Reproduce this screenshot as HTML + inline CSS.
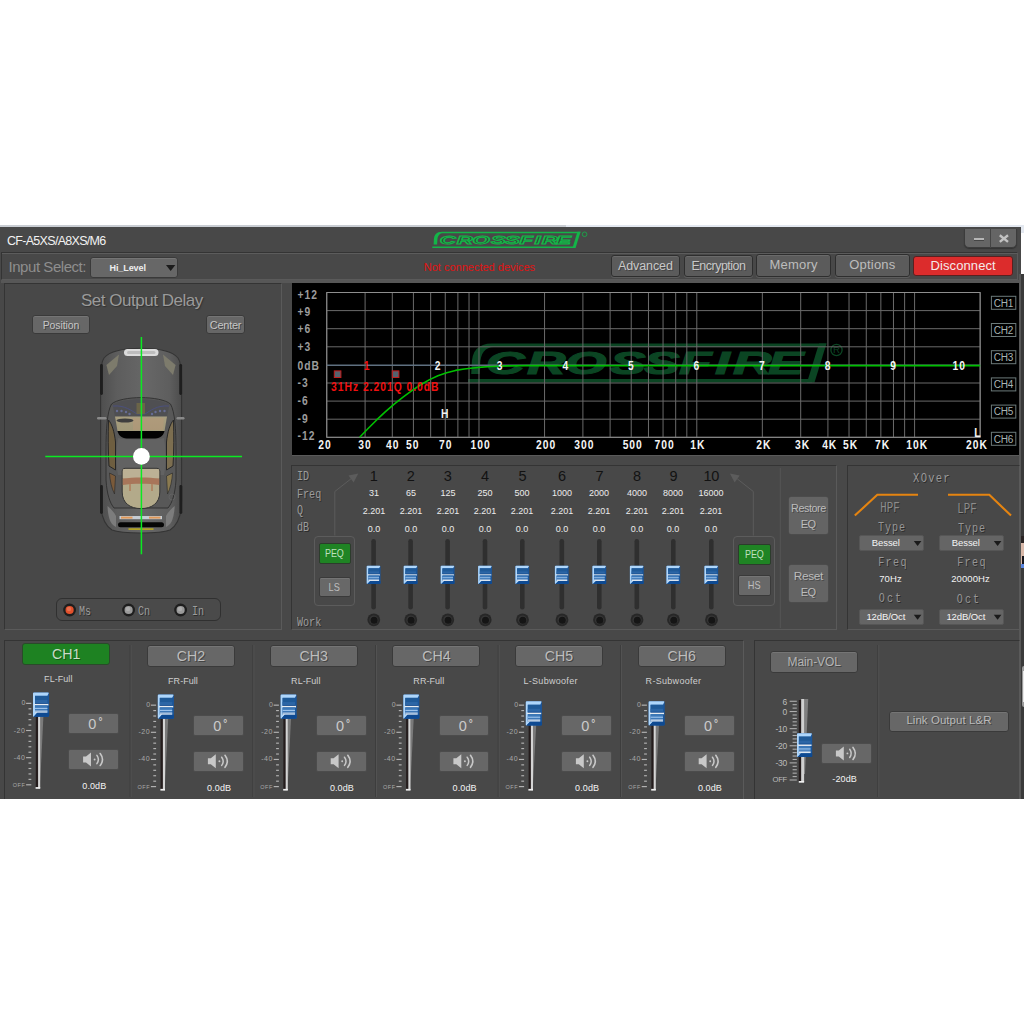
<!DOCTYPE html>
<html><head><meta charset="utf-8"><title>CF-A5XS/A8XS/M6</title>
<style>
html,body{margin:0;padding:0;background:#ffffff;}
body{width:1024px;height:1024px;position:relative;overflow:hidden;font-family:"Liberation Sans",sans-serif;}
.a{position:absolute;}
.t{position:absolute;white-space:nowrap;height:20px;line-height:20px;}
.panel{position:absolute;box-sizing:border-box;border:1px solid;border-color:#343434 #5a5a5a #5a5a5a #343434;}
.btn{position:absolute;box-sizing:border-box;border:1px solid #3a3a3a;border-radius:3px;box-shadow:inset 0 1px 0 #757575;text-align:center;white-space:nowrap;overflow:hidden;}
svg.ov{position:absolute;left:0;top:0;pointer-events:none;}
</style></head>
<body>
<div class="a" style="left:0.00px;top:225.40px;width:1021.00px;height:1.60px;background:#c9cdd3;"></div>
<div class="a" style="left:566.00px;top:224.60px;width:458.00px;height:8.80px;background:#e3e8f0;"></div>
<div class="a" style="left:0.00px;top:227.00px;width:1020.60px;height:571.50px;background:#484848;"></div>
<div class="a" style="left:1020.60px;top:274.00px;width:3.40px;height:524.50px;background:#3a3a3a;"></div>
<div class="a" style="left:1019.30px;top:274.00px;width:1.30px;height:524.50px;background:#585858;"></div>
<div class="a" style="left:1021.00px;top:536.00px;width:3.00px;height:32.00px;background:#d8b8a8;"></div>
<div class="a" style="left:1021.00px;top:536.00px;width:3.00px;height:7.00px;background:#2a2424;"></div>
<div class="a" style="left:1021.50px;top:556.00px;width:2.50px;height:9.00px;background:#16161c;"></div>
<div class="a" style="left:1021.00px;top:564.00px;width:3.00px;height:4.00px;background:#5a86e0;"></div>
<div class="a" style="left:1021.50px;top:666.00px;width:2.50px;height:41.00px;background:#9a9a9a;border-radius:3px 0 0 3px;"></div>
<div class="a" style="left:1022.50px;top:671.00px;width:1.50px;height:31.00px;background:#e8e8e8;"></div>
<div class="t" style="left:7.00px;top:231.00px;font-size:12.5px;color:#f2f2f2;letter-spacing:-0.7px;">CF-A5XS/A8XS/M6</div>
<div class="a" style="left:964px;top:228.5px;width:52.6px;height:19.5px;background:#656565;border:1px solid #3c3c3c;border-top:none;border-radius:0 0 5px 5px;box-sizing:border-box;box-shadow:0 1px 1px #333;"></div>
<div class="a" style="left:990.00px;top:228.50px;width:1.00px;height:19.00px;background:#444;"></div>
<div class="a" style="left:973.50px;top:237.90px;width:10.20px;height:1.80px;background:#b6b6b6;box-shadow:0 1px 0 #444;"></div>
<div class="panel" style="left:1.00px;top:252.00px;width:1016.50px;height:28.00px;box-shadow:inset 0 1px 0 #5c5c5c;"></div>
<div class="t" style="left:8.50px;top:257.00px;font-size:15px;color:#8e8e8e;letter-spacing:-0.45px;">Input Select:</div>
<div class="btn" style="left:89.80px;top:256.80px;width:88.40px;height:21.20px;line-height:20.60px;font-size:9px;color:#f0f0f0;background:#676767;border-radius:3px;"></div>
<div class="t" style="left:127.70px;top:257.50px;font-size:9px;color:#eeeeee;transform:translateX(-50%);font-weight:bold;letter-spacing:-0.1px;">Hi_Level</div>
<div class="t" style="left:423.80px;top:257.00px;font-size:11px;color:#e01212;letter-spacing:0px;">Not connected devices</div>
<div class="btn" style="left:610.50px;top:255.00px;width:69.80px;height:21.60px;line-height:21.00px;font-size:12.5px;color:#c8c8c8;background:#5b5b5b;border-color:#2e2e2e;box-shadow:inset 0 1px 0 #6a6a6a,0 1px 0 #5c5c5c;letter-spacing:-0.1px;text-shadow:1px 1px 0 #444;">Advanced</div>
<div class="btn" style="left:683.70px;top:255.00px;width:69.60px;height:21.60px;line-height:21.00px;font-size:12.5px;color:#c8c8c8;background:#5b5b5b;border-color:#2e2e2e;box-shadow:inset 0 1px 0 #6a6a6a,0 1px 0 #5c5c5c;letter-spacing:-0.5px;text-shadow:1px 1px 0 #444;">Encryption</div>
<div class="btn" style="left:756.00px;top:254.20px;width:75.30px;height:22.40px;line-height:21.80px;font-size:13px;color:#bdbdbd;background:#5b5b5b;border-color:#2e2e2e;box-shadow:inset 0 1px 0 #6a6a6a,0 1px 0 #5c5c5c;letter-spacing:0.2px;line-height:19.5px;">Memory</div>
<div class="btn" style="left:834.70px;top:254.20px;width:75.40px;height:22.40px;line-height:21.80px;font-size:13px;color:#bdbdbd;background:#5b5b5b;border-color:#2e2e2e;box-shadow:inset 0 1px 0 #6a6a6a,0 1px 0 #5c5c5c;letter-spacing:0.2px;line-height:19.5px;">Options</div>
<div class="btn" style="left:913.00px;top:255.50px;width:100.30px;height:20.30px;line-height:18.50px;font-size:13px;color:#f4eaea;background:#dc2c2c;border-color:#5a2020;box-shadow:none;letter-spacing:0.1px;">Disconnect</div>
<div class="panel" style="left:4.00px;top:283.00px;width:278.00px;height:347.00px;"></div>
<div class="t" style="left:81.00px;top:290.70px;font-size:17px;color:#9a9a9a;letter-spacing:-0.48px;text-shadow:1px 1px 1px #333;">Set Output Delay</div>
<div class="btn" style="left:32.20px;top:315.20px;width:57.60px;height:18.90px;line-height:18.30px;font-size:10.5px;color:#c6c6c6;background:#676767;letter-spacing:-0.1px;text-shadow:1px 1px 0 #444;">Position</div>
<div class="btn" style="left:205.70px;top:315.20px;width:39.70px;height:18.90px;line-height:18.30px;font-size:11px;color:#c6c6c6;background:#676767;letter-spacing:-0.25px;text-shadow:1px 1px 0 #444;">Center</div>
<div class="a" style="left:56px;top:598px;width:164.5px;height:22.6px;box-sizing:border-box;border:1px solid #303030;border-radius:6px;background:#4a4a4a;"></div>
<div class="t" style="left:79.00px;top:601.50px;font-size:12px;color:#9c9c9c;font-family:'Liberation Mono',monospace;letter-spacing:0px;text-shadow:1px 1px 0 #2c2c2c;transform:scaleX(0.84);transform-origin:0 50%;">Ms</div>
<div class="t" style="left:138.00px;top:601.50px;font-size:12px;color:#9c9c9c;font-family:'Liberation Mono',monospace;letter-spacing:0px;text-shadow:1px 1px 0 #2c2c2c;transform:scaleX(0.84);transform-origin:0 50%;">Cn</div>
<div class="t" style="left:191.50px;top:601.50px;font-size:12px;color:#9c9c9c;font-family:'Liberation Mono',monospace;letter-spacing:0px;text-shadow:1px 1px 0 #2c2c2c;transform:scaleX(0.84);transform-origin:0 50%;">In</div>
<div class="a" style="left:1.00px;top:280.00px;width:1018.00px;height:3.20px;background:#575757;"></div>
<div class="a" style="left:291.75px;top:283.20px;width:727.00px;height:171.80px;background:#000000;"></div>
<div class="a" style="left:291.75px;top:455.00px;width:727.00px;height:1.40px;background:#5a5a5a;"></div>
<div class="panel" style="left:291.00px;top:465.00px;width:545.50px;height:165.00px;"></div>
<div class="t" style="left:297.30px;top:467.00px;font-size:12px;color:#9c9c9c;font-family:'Liberation Mono',monospace;letter-spacing:0px;text-shadow:1px 1px 0 #2c2c2c;transform:scaleX(0.84);transform-origin:0 50%;">ID</div>
<div class="t" style="left:297.30px;top:485.00px;font-size:12px;color:#9c9c9c;font-family:'Liberation Mono',monospace;letter-spacing:0px;text-shadow:1px 1px 0 #2c2c2c;transform:scaleX(0.84);transform-origin:0 50%;">Freq</div>
<div class="t" style="left:297.30px;top:500.80px;font-size:12px;color:#9c9c9c;font-family:'Liberation Mono',monospace;letter-spacing:0px;text-shadow:1px 1px 0 #2c2c2c;transform:scaleX(0.84);transform-origin:0 50%;">Q</div>
<div class="t" style="left:297.30px;top:517.50px;font-size:12px;color:#9c9c9c;font-family:'Liberation Mono',monospace;letter-spacing:0px;text-shadow:1px 1px 0 #2c2c2c;transform:scaleX(0.84);transform-origin:0 50%;">dB</div>
<div class="t" style="left:297.30px;top:612.50px;font-size:12px;color:#9c9c9c;font-family:'Liberation Mono',monospace;letter-spacing:0px;text-shadow:1px 1px 0 #2c2c2c;transform:scaleX(0.84);transform-origin:0 50%;">Work</div>
<div class="t" style="left:373.60px;top:465.90px;font-size:14.5px;color:#121212;transform:translateX(-50%);letter-spacing:-0.3px;">1</div>
<div class="t" style="left:373.60px;top:483.00px;font-size:10px;color:#ececec;transform:translateX(-50%) scale(0.9,0.87);">31</div>
<div class="t" style="left:373.60px;top:501.00px;font-size:10px;color:#ececec;transform:translateX(-50%) scale(0.9,0.87);">2.201</div>
<div class="t" style="left:373.60px;top:519.00px;font-size:10px;color:#ececec;transform:translateX(-50%) scale(0.9,0.87);">0.0</div>
<div class="t" style="left:410.60px;top:465.90px;font-size:14.5px;color:#121212;transform:translateX(-50%);letter-spacing:-0.3px;">2</div>
<div class="t" style="left:410.60px;top:483.00px;font-size:10px;color:#ececec;transform:translateX(-50%) scale(0.9,0.87);">65</div>
<div class="t" style="left:410.60px;top:501.00px;font-size:10px;color:#ececec;transform:translateX(-50%) scale(0.9,0.87);">2.201</div>
<div class="t" style="left:410.60px;top:519.00px;font-size:10px;color:#ececec;transform:translateX(-50%) scale(0.9,0.87);">0.0</div>
<div class="t" style="left:447.60px;top:465.90px;font-size:14.5px;color:#121212;transform:translateX(-50%);letter-spacing:-0.3px;">3</div>
<div class="t" style="left:447.60px;top:483.00px;font-size:10px;color:#ececec;transform:translateX(-50%) scale(0.9,0.87);">125</div>
<div class="t" style="left:447.60px;top:501.00px;font-size:10px;color:#ececec;transform:translateX(-50%) scale(0.9,0.87);">2.201</div>
<div class="t" style="left:447.60px;top:519.00px;font-size:10px;color:#ececec;transform:translateX(-50%) scale(0.9,0.87);">0.0</div>
<div class="t" style="left:485.00px;top:465.90px;font-size:14.5px;color:#121212;transform:translateX(-50%);letter-spacing:-0.3px;">4</div>
<div class="t" style="left:485.00px;top:483.00px;font-size:10px;color:#ececec;transform:translateX(-50%) scale(0.9,0.87);">250</div>
<div class="t" style="left:485.00px;top:501.00px;font-size:10px;color:#ececec;transform:translateX(-50%) scale(0.9,0.87);">2.201</div>
<div class="t" style="left:485.00px;top:519.00px;font-size:10px;color:#ececec;transform:translateX(-50%) scale(0.9,0.87);">0.0</div>
<div class="t" style="left:522.30px;top:465.90px;font-size:14.5px;color:#121212;transform:translateX(-50%);letter-spacing:-0.3px;">5</div>
<div class="t" style="left:522.30px;top:483.00px;font-size:10px;color:#ececec;transform:translateX(-50%) scale(0.9,0.87);">500</div>
<div class="t" style="left:522.30px;top:501.00px;font-size:10px;color:#ececec;transform:translateX(-50%) scale(0.9,0.87);">2.201</div>
<div class="t" style="left:522.30px;top:519.00px;font-size:10px;color:#ececec;transform:translateX(-50%) scale(0.9,0.87);">0.0</div>
<div class="t" style="left:561.80px;top:465.90px;font-size:14.5px;color:#121212;transform:translateX(-50%);letter-spacing:-0.3px;">6</div>
<div class="t" style="left:561.80px;top:483.00px;font-size:10px;color:#ececec;transform:translateX(-50%) scale(0.9,0.87);">1000</div>
<div class="t" style="left:561.80px;top:501.00px;font-size:10px;color:#ececec;transform:translateX(-50%) scale(0.9,0.87);">2.201</div>
<div class="t" style="left:561.80px;top:519.00px;font-size:10px;color:#ececec;transform:translateX(-50%) scale(0.9,0.87);">0.0</div>
<div class="t" style="left:599.30px;top:465.90px;font-size:14.5px;color:#121212;transform:translateX(-50%);letter-spacing:-0.3px;">7</div>
<div class="t" style="left:599.30px;top:483.00px;font-size:10px;color:#ececec;transform:translateX(-50%) scale(0.9,0.87);">2000</div>
<div class="t" style="left:599.30px;top:501.00px;font-size:10px;color:#ececec;transform:translateX(-50%) scale(0.9,0.87);">2.201</div>
<div class="t" style="left:599.30px;top:519.00px;font-size:10px;color:#ececec;transform:translateX(-50%) scale(0.9,0.87);">0.0</div>
<div class="t" style="left:636.80px;top:465.90px;font-size:14.5px;color:#121212;transform:translateX(-50%);letter-spacing:-0.3px;">8</div>
<div class="t" style="left:636.80px;top:483.00px;font-size:10px;color:#ececec;transform:translateX(-50%) scale(0.9,0.87);">4000</div>
<div class="t" style="left:636.80px;top:501.00px;font-size:10px;color:#ececec;transform:translateX(-50%) scale(0.9,0.87);">2.201</div>
<div class="t" style="left:636.80px;top:519.00px;font-size:10px;color:#ececec;transform:translateX(-50%) scale(0.9,0.87);">0.0</div>
<div class="t" style="left:673.30px;top:465.90px;font-size:14.5px;color:#121212;transform:translateX(-50%);letter-spacing:-0.3px;">9</div>
<div class="t" style="left:673.30px;top:483.00px;font-size:10px;color:#ececec;transform:translateX(-50%) scale(0.9,0.87);">8000</div>
<div class="t" style="left:673.30px;top:501.00px;font-size:10px;color:#ececec;transform:translateX(-50%) scale(0.9,0.87);">2.201</div>
<div class="t" style="left:673.30px;top:519.00px;font-size:10px;color:#ececec;transform:translateX(-50%) scale(0.9,0.87);">0.0</div>
<div class="t" style="left:711.30px;top:465.90px;font-size:14.5px;color:#121212;transform:translateX(-50%);letter-spacing:-0.3px;">10</div>
<div class="t" style="left:711.30px;top:483.00px;font-size:10px;color:#ececec;transform:translateX(-50%) scale(0.9,0.87);">16000</div>
<div class="t" style="left:711.30px;top:501.00px;font-size:10px;color:#ececec;transform:translateX(-50%) scale(0.9,0.87);">2.201</div>
<div class="t" style="left:711.30px;top:519.00px;font-size:10px;color:#ececec;transform:translateX(-50%) scale(0.9,0.87);">0.0</div>
<div class="a" style="left:313.80px;top:535.5px;width:41.70px;height:70px;box-sizing:border-box;border:1px solid #5c5c5c;border-radius:4px;"></div>
<div class="btn" style="left:318.50px;top:543.20px;width:32.60px;height:21.20px;line-height:19.20px;font-size:11.5px;color:#bfe0bf;background:#1f8424;border-color:#2c3c2c;box-shadow:none;border-radius:2px;"><span style="display:inline-block;transform:scaleX(0.78) translateX(-1px)">PEQ</span></div>
<div class="btn" style="left:318.50px;top:577.00px;width:32.60px;height:20.40px;line-height:18.40px;font-size:11.5px;color:#bdbdbd;background:#686868;border-radius:2px;"><span style="display:inline-block;transform:scaleX(0.8) translateX(-1px)">LS</span></div>
<div class="a" style="left:733.00px;top:535.5px;width:41.60px;height:70px;box-sizing:border-box;border:1px solid #5c5c5c;border-radius:4px;"></div>
<div class="btn" style="left:738.00px;top:544.00px;width:33.30px;height:21.00px;line-height:19.00px;font-size:11.5px;color:#bfe0bf;background:#1f8424;border-color:#2c3c2c;box-shadow:none;border-radius:2px;"><span style="display:inline-block;transform:scaleX(0.78) translateX(-1px)">PEQ</span></div>
<div class="btn" style="left:738.00px;top:574.80px;width:33.30px;height:21.30px;line-height:19.30px;font-size:11.5px;color:#bdbdbd;background:#686868;border-radius:2px;"><span style="display:inline-block;transform:scaleX(0.8) translateX(-1px)">HS</span></div>
<div class="a" style="left:789.3px;top:497.30px;width:38.3px;height:36.70px;background:#646464;border-radius:2px;box-shadow:0 0 0 0.5px #505050;"></div>
<div class="t" style="left:808.40px;top:498.00px;font-size:10.8px;color:#bcbcbc;transform:translateX(-50%);letter-spacing:-0.45px;text-shadow:1px 1px 0 #4a4a4a;">Restore</div>
<div class="t" style="left:808.20px;top:513.90px;font-size:11px;color:#bcbcbc;transform:translateX(-50%);letter-spacing:-0.4px;text-shadow:1px 1px 0 #4a4a4a;">EQ</div>
<div class="a" style="left:789.3px;top:565.30px;width:38.3px;height:37.00px;background:#646464;border-radius:2px;box-shadow:0 0 0 0.5px #505050;"></div>
<div class="t" style="left:808.40px;top:566.30px;font-size:11.8px;color:#bcbcbc;transform:translateX(-50%);letter-spacing:-0.3px;text-shadow:1px 1px 0 #4a4a4a;">Reset</div>
<div class="t" style="left:808.20px;top:581.90px;font-size:11px;color:#bcbcbc;transform:translateX(-50%);letter-spacing:-0.4px;text-shadow:1px 1px 0 #4a4a4a;">EQ</div>
<div class="panel" style="left:847.00px;top:465.00px;width:172.50px;height:165.00px;"></div>
<div class="t" style="left:932.20px;top:469.20px;font-size:12.5px;color:#9a9a9a;font-family:'Liberation Mono',monospace;letter-spacing:1.5px;text-shadow:1px 1px 0 #2c2c2c;transform:translateX(-50%) scaleX(0.84);">XOver</div>
<div class="t" style="left:890.30px;top:499.30px;font-size:15px;color:#8c8c8c;font-family:'Liberation Mono',monospace;letter-spacing:0px;text-shadow:1px 1px 0 #2c2c2c;transform:translateX(-50%) scaleX(0.72);">HPF</div>
<div class="t" style="left:966.80px;top:500.00px;font-size:15px;color:#8c8c8c;font-family:'Liberation Mono',monospace;letter-spacing:0px;text-shadow:1px 1px 0 #2c2c2c;transform:translateX(-50%) scaleX(0.72);">LPF</div>
<div class="t" style="left:892.30px;top:517.80px;font-size:12px;color:#969696;font-family:'Liberation Mono',monospace;letter-spacing:1.2px;text-shadow:1px 1px 0 #2c2c2c;transform:translateX(-50%) scaleX(0.84);">Type</div>
<div class="t" style="left:971.50px;top:518.60px;font-size:12px;color:#969696;font-family:'Liberation Mono',monospace;letter-spacing:1.2px;text-shadow:1px 1px 0 #2c2c2c;transform:translateX(-50%) scaleX(0.84);">Type</div>
<div class="t" style="left:892.60px;top:552.60px;font-size:12px;color:#969696;font-family:'Liberation Mono',monospace;letter-spacing:1.6px;text-shadow:1px 1px 0 #2c2c2c;transform:translateX(-50%) scaleX(0.84);">Freq</div>
<div class="t" style="left:972.10px;top:553.00px;font-size:12px;color:#969696;font-family:'Liberation Mono',monospace;letter-spacing:1.6px;text-shadow:1px 1px 0 #2c2c2c;transform:translateX(-50%) scaleX(0.84);">Freq</div>
<div class="t" style="left:890.70px;top:588.80px;font-size:12px;color:#969696;font-family:'Liberation Mono',monospace;letter-spacing:2.6px;text-shadow:1px 1px 0 #2c2c2c;transform:translateX(-50%) scaleX(0.84);">Oct</div>
<div class="t" style="left:969.40px;top:589.60px;font-size:12px;color:#969696;font-family:'Liberation Mono',monospace;letter-spacing:2.6px;text-shadow:1px 1px 0 #2c2c2c;transform:translateX(-50%) scaleX(0.84);">Oct</div>
<div class="t" style="left:890.50px;top:568.60px;font-size:9.5px;color:#f2f2f2;transform:translateX(-50%);letter-spacing:0.1px;">70Hz</div>
<div class="t" style="left:970.50px;top:568.60px;font-size:9.5px;color:#f2f2f2;transform:translateX(-50%);letter-spacing:0.1px;">20000Hz</div>
<div class="btn" style="left:859.40px;top:535.20px;width:64.60px;height:15.80px;line-height:15.20px;font-size:9px;color:#eee;background:#656565;border-radius:2px;border-color:#565656;box-shadow:none;"></div>
<div class="t" style="left:885.80px;top:533.20px;font-size:9.5px;color:#f4f4f4;transform:translateX(-50%);letter-spacing:-0.1px;">Bessel</div>
<div class="btn" style="left:859.40px;top:609.00px;width:64.60px;height:15.80px;line-height:15.20px;font-size:9px;color:#eee;background:#656565;border-radius:2px;border-color:#565656;box-shadow:none;"></div>
<div class="t" style="left:885.80px;top:607.00px;font-size:9.5px;color:#f4f4f4;transform:translateX(-50%);letter-spacing:-0.1px;">12dB/Oct</div>
<div class="btn" style="left:939.40px;top:535.20px;width:64.60px;height:15.80px;line-height:15.20px;font-size:9px;color:#eee;background:#656565;border-radius:2px;border-color:#565656;box-shadow:none;"></div>
<div class="t" style="left:965.80px;top:533.20px;font-size:9.5px;color:#f4f4f4;transform:translateX(-50%);letter-spacing:-0.1px;">Bessel</div>
<div class="btn" style="left:939.40px;top:609.00px;width:64.60px;height:15.80px;line-height:15.20px;font-size:9px;color:#eee;background:#656565;border-radius:2px;border-color:#565656;box-shadow:none;"></div>
<div class="t" style="left:965.80px;top:607.00px;font-size:9.5px;color:#f4f4f4;transform:translateX(-50%);letter-spacing:-0.1px;">12dB/Oct</div>
<div class="panel" style="left:4.00px;top:640.00px;width:740.00px;height:158.70px;border-bottom:none;"></div>
<div class="panel" style="left:753.60px;top:640.00px;width:266.00px;height:158.70px;border-bottom:none;"></div>
<div class="btn" style="left:22.20px;top:643.40px;width:87.80px;height:21.90px;line-height:21.30px;font-size:14.2px;color:#c9dcc9;background:#1e8222;border-color:#2a4a2a;box-shadow:none;border-radius:3px;text-shadow:1px 1px 0 #145a18;">CH1</div>
<div class="t" style="left:58.30px;top:669.30px;font-size:9px;color:#cfcfcf;transform:translateX(-50%);letter-spacing:0.05px;">FL-Full</div>
<div class="t" style="left:25.30px;top:693.40px;font-size:7px;color:#a8a8a8;transform:translateX(-100%);letter-spacing:0px;">0</div>
<div class="t" style="left:25.30px;top:720.50px;font-size:7px;color:#a8a8a8;transform:translateX(-100%);letter-spacing:0.5px;">-20</div>
<div class="t" style="left:25.30px;top:747.60px;font-size:7px;color:#a8a8a8;transform:translateX(-100%);letter-spacing:0.5px;">-40</div>
<div class="t" style="left:25.30px;top:774.90px;font-size:5.5px;color:#a8a8a8;transform:translateX(-100%);letter-spacing:0.55px;">OFF</div>
<div class="btn" style="left:68.20px;top:713.20px;width:50.80px;height:20.90px;line-height:20.30px;font-size:14px;color:#c8c8c8;background:#676767;border-color:#4c4c4c;box-shadow:none;border-radius:2px;"></div>
<div class="t" style="left:92.40px;top:714.20px;font-size:14.5px;color:#cacaca;transform:translateX(-50%);">0</div>
<div class="t" style="left:100.40px;top:712.20px;font-size:10px;color:#cacaca;transform:translateX(-50%);font-weight:bold;">°</div>
<div class="btn" style="left:68.20px;top:749.30px;width:50.80px;height:20.50px;line-height:19.90px;font-size:14px;color:#c8c8c8;background:#676767;border-color:#4c4c4c;box-shadow:none;border-radius:2px;"></div>
<div class="t" style="left:94.30px;top:775.70px;font-size:9px;color:#f4f4f4;transform:translateX(-50%);letter-spacing:0.1px;">0.0dB</div>
<div class="btn" style="left:146.80px;top:645.10px;width:88.20px;height:22.10px;line-height:21.50px;font-size:14.2px;color:#bdbdbd;background:#676767;text-shadow:1px 1px 0 #444;">CH2</div>
<div class="t" style="left:183.00px;top:670.80px;font-size:9px;color:#cfcfcf;transform:translateX(-50%);letter-spacing:0.05px;">FR-Full</div>
<div class="t" style="left:150.10px;top:695.20px;font-size:7px;color:#a8a8a8;transform:translateX(-100%);letter-spacing:0px;">0</div>
<div class="t" style="left:150.10px;top:722.30px;font-size:7px;color:#a8a8a8;transform:translateX(-100%);letter-spacing:0.5px;">-20</div>
<div class="t" style="left:150.10px;top:749.40px;font-size:7px;color:#a8a8a8;transform:translateX(-100%);letter-spacing:0.5px;">-40</div>
<div class="t" style="left:150.10px;top:776.70px;font-size:5.5px;color:#a8a8a8;transform:translateX(-100%);letter-spacing:0.55px;">OFF</div>
<div class="btn" style="left:193.00px;top:715.00px;width:50.80px;height:20.90px;line-height:20.30px;font-size:14px;color:#c8c8c8;background:#676767;border-color:#4c4c4c;box-shadow:none;border-radius:2px;"></div>
<div class="t" style="left:217.20px;top:716.00px;font-size:14.5px;color:#cacaca;transform:translateX(-50%);">0</div>
<div class="t" style="left:225.20px;top:714.00px;font-size:10px;color:#cacaca;transform:translateX(-50%);font-weight:bold;">°</div>
<div class="btn" style="left:193.00px;top:751.10px;width:50.80px;height:20.50px;line-height:19.90px;font-size:14px;color:#c8c8c8;background:#676767;border-color:#4c4c4c;box-shadow:none;border-radius:2px;"></div>
<div class="t" style="left:219.10px;top:777.50px;font-size:9px;color:#f4f4f4;transform:translateX(-50%);letter-spacing:0.1px;">0.0dB</div>
<div class="btn" style="left:269.60px;top:645.10px;width:88.20px;height:22.10px;line-height:21.50px;font-size:14.2px;color:#bdbdbd;background:#676767;text-shadow:1px 1px 0 #444;">CH3</div>
<div class="t" style="left:305.80px;top:670.80px;font-size:9px;color:#cfcfcf;transform:translateX(-50%);letter-spacing:0.05px;">RL-Full</div>
<div class="t" style="left:272.90px;top:695.20px;font-size:7px;color:#a8a8a8;transform:translateX(-100%);letter-spacing:0px;">0</div>
<div class="t" style="left:272.90px;top:722.30px;font-size:7px;color:#a8a8a8;transform:translateX(-100%);letter-spacing:0.5px;">-20</div>
<div class="t" style="left:272.90px;top:749.40px;font-size:7px;color:#a8a8a8;transform:translateX(-100%);letter-spacing:0.5px;">-40</div>
<div class="t" style="left:272.90px;top:776.70px;font-size:5.5px;color:#a8a8a8;transform:translateX(-100%);letter-spacing:0.55px;">OFF</div>
<div class="btn" style="left:315.80px;top:715.00px;width:50.80px;height:20.90px;line-height:20.30px;font-size:14px;color:#c8c8c8;background:#676767;border-color:#4c4c4c;box-shadow:none;border-radius:2px;"></div>
<div class="t" style="left:340.00px;top:716.00px;font-size:14.5px;color:#cacaca;transform:translateX(-50%);">0</div>
<div class="t" style="left:348.00px;top:714.00px;font-size:10px;color:#cacaca;transform:translateX(-50%);font-weight:bold;">°</div>
<div class="btn" style="left:315.80px;top:751.10px;width:50.80px;height:20.50px;line-height:19.90px;font-size:14px;color:#c8c8c8;background:#676767;border-color:#4c4c4c;box-shadow:none;border-radius:2px;"></div>
<div class="t" style="left:341.90px;top:777.50px;font-size:9px;color:#f4f4f4;transform:translateX(-50%);letter-spacing:0.1px;">0.0dB</div>
<div class="btn" style="left:392.30px;top:645.10px;width:88.20px;height:22.10px;line-height:21.50px;font-size:14.2px;color:#bdbdbd;background:#676767;text-shadow:1px 1px 0 #444;">CH4</div>
<div class="t" style="left:428.80px;top:670.80px;font-size:9px;color:#cfcfcf;transform:translateX(-50%);letter-spacing:0.05px;">RR-Full</div>
<div class="t" style="left:395.60px;top:695.20px;font-size:7px;color:#a8a8a8;transform:translateX(-100%);letter-spacing:0px;">0</div>
<div class="t" style="left:395.60px;top:722.30px;font-size:7px;color:#a8a8a8;transform:translateX(-100%);letter-spacing:0.5px;">-20</div>
<div class="t" style="left:395.60px;top:749.40px;font-size:7px;color:#a8a8a8;transform:translateX(-100%);letter-spacing:0.5px;">-40</div>
<div class="t" style="left:395.60px;top:776.70px;font-size:5.5px;color:#a8a8a8;transform:translateX(-100%);letter-spacing:0.55px;">OFF</div>
<div class="btn" style="left:438.50px;top:715.00px;width:50.80px;height:20.90px;line-height:20.30px;font-size:14px;color:#c8c8c8;background:#676767;border-color:#4c4c4c;box-shadow:none;border-radius:2px;"></div>
<div class="t" style="left:462.70px;top:716.00px;font-size:14.5px;color:#cacaca;transform:translateX(-50%);">0</div>
<div class="t" style="left:470.70px;top:714.00px;font-size:10px;color:#cacaca;transform:translateX(-50%);font-weight:bold;">°</div>
<div class="btn" style="left:438.50px;top:751.10px;width:50.80px;height:20.50px;line-height:19.90px;font-size:14px;color:#c8c8c8;background:#676767;border-color:#4c4c4c;box-shadow:none;border-radius:2px;"></div>
<div class="t" style="left:464.60px;top:777.50px;font-size:9px;color:#f4f4f4;transform:translateX(-50%);letter-spacing:0.1px;">0.0dB</div>
<div class="btn" style="left:514.80px;top:645.10px;width:88.20px;height:22.10px;line-height:21.50px;font-size:14.2px;color:#bdbdbd;background:#676767;text-shadow:1px 1px 0 #444;">CH5</div>
<div class="t" style="left:550.60px;top:670.80px;font-size:9px;color:#cfcfcf;transform:translateX(-50%);letter-spacing:0.3px;">L-Subwoofer</div>
<div class="t" style="left:518.10px;top:695.20px;font-size:7px;color:#a8a8a8;transform:translateX(-100%);letter-spacing:0px;">0</div>
<div class="t" style="left:518.10px;top:722.30px;font-size:7px;color:#a8a8a8;transform:translateX(-100%);letter-spacing:0.5px;">-20</div>
<div class="t" style="left:518.10px;top:749.40px;font-size:7px;color:#a8a8a8;transform:translateX(-100%);letter-spacing:0.5px;">-40</div>
<div class="t" style="left:518.10px;top:776.70px;font-size:5.5px;color:#a8a8a8;transform:translateX(-100%);letter-spacing:0.55px;">OFF</div>
<div class="btn" style="left:561.00px;top:715.00px;width:50.80px;height:20.90px;line-height:20.30px;font-size:14px;color:#c8c8c8;background:#676767;border-color:#4c4c4c;box-shadow:none;border-radius:2px;"></div>
<div class="t" style="left:585.20px;top:716.00px;font-size:14.5px;color:#cacaca;transform:translateX(-50%);">0</div>
<div class="t" style="left:593.20px;top:714.00px;font-size:10px;color:#cacaca;transform:translateX(-50%);font-weight:bold;">°</div>
<div class="btn" style="left:561.00px;top:751.10px;width:50.80px;height:20.50px;line-height:19.90px;font-size:14px;color:#c8c8c8;background:#676767;border-color:#4c4c4c;box-shadow:none;border-radius:2px;"></div>
<div class="t" style="left:587.10px;top:777.50px;font-size:9px;color:#f4f4f4;transform:translateX(-50%);letter-spacing:0.1px;">0.0dB</div>
<div class="btn" style="left:637.60px;top:645.10px;width:88.20px;height:22.10px;line-height:21.50px;font-size:14.2px;color:#bdbdbd;background:#676767;text-shadow:1px 1px 0 #444;">CH6</div>
<div class="t" style="left:673.50px;top:670.80px;font-size:9px;color:#cfcfcf;transform:translateX(-50%);letter-spacing:0.3px;">R-Subwoofer</div>
<div class="t" style="left:640.90px;top:695.20px;font-size:7px;color:#a8a8a8;transform:translateX(-100%);letter-spacing:0px;">0</div>
<div class="t" style="left:640.90px;top:722.30px;font-size:7px;color:#a8a8a8;transform:translateX(-100%);letter-spacing:0.5px;">-20</div>
<div class="t" style="left:640.90px;top:749.40px;font-size:7px;color:#a8a8a8;transform:translateX(-100%);letter-spacing:0.5px;">-40</div>
<div class="t" style="left:640.90px;top:776.70px;font-size:5.5px;color:#a8a8a8;transform:translateX(-100%);letter-spacing:0.55px;">OFF</div>
<div class="btn" style="left:683.80px;top:715.00px;width:50.80px;height:20.90px;line-height:20.30px;font-size:14px;color:#c8c8c8;background:#676767;border-color:#4c4c4c;box-shadow:none;border-radius:2px;"></div>
<div class="t" style="left:708.00px;top:716.00px;font-size:14.5px;color:#cacaca;transform:translateX(-50%);">0</div>
<div class="t" style="left:716.00px;top:714.00px;font-size:10px;color:#cacaca;transform:translateX(-50%);font-weight:bold;">°</div>
<div class="btn" style="left:683.80px;top:751.10px;width:50.80px;height:20.50px;line-height:19.90px;font-size:14px;color:#c8c8c8;background:#676767;border-color:#4c4c4c;box-shadow:none;border-radius:2px;"></div>
<div class="t" style="left:709.90px;top:777.50px;font-size:9px;color:#f4f4f4;transform:translateX(-50%);letter-spacing:0.1px;">0.0dB</div>
<div class="btn" style="left:770.00px;top:651.20px;width:88.40px;height:21.80px;line-height:21.20px;font-size:12px;color:#b4b4b4;background:#676767;letter-spacing:-0.1px;text-shadow:1px 1px 0 #444;">Main-VOL</div>
<div class="t" style="left:786.90px;top:691.50px;font-size:8.5px;color:#bcbcbc;transform:translateX(-100%);letter-spacing:-0.3px;">6</div>
<div class="t" style="left:786.90px;top:701.77px;font-size:8.5px;color:#bcbcbc;transform:translateX(-100%);letter-spacing:-0.3px;">0</div>
<div class="t" style="left:786.90px;top:718.88px;font-size:8.5px;color:#bcbcbc;transform:translateX(-100%);letter-spacing:-0.3px;">-10</div>
<div class="t" style="left:786.90px;top:736.00px;font-size:8.5px;color:#bcbcbc;transform:translateX(-100%);letter-spacing:-0.3px;">-20</div>
<div class="t" style="left:786.90px;top:753.11px;font-size:8.5px;color:#bcbcbc;transform:translateX(-100%);letter-spacing:-0.3px;">-30</div>
<div class="t" style="left:786.90px;top:770.23px;font-size:7.6px;color:#bcbcbc;transform:translateX(-100%);letter-spacing:-0.3px;">OFF</div>
<div class="btn" style="left:821.00px;top:743.20px;width:51.10px;height:20.40px;line-height:19.80px;font-size:14px;color:#c8c8c8;background:#676767;border-color:#4c4c4c;box-shadow:none;border-radius:2px;"></div>
<div class="t" style="left:844.60px;top:768.80px;font-size:9px;color:#f4f4f4;transform:translateX(-50%);letter-spacing:0.1px;">-20dB</div>
<div class="btn" style="left:888.50px;top:710.50px;width:120.90px;height:21.10px;line-height:17.70px;font-size:11.5px;color:#bababa;background:#676767;letter-spacing:0.05px;text-shadow:1px 1px 0 #444;">Link Output L&amp;R</div>
<svg class="ov" width="1024" height="1024" viewBox="0 0 1024 1024">
<path d="M999.8,235.3 L1008,241.9 M1008,235.3 L999.8,241.9" stroke="#c2c2c2" stroke-width="2.4" fill="none"/>
<g transform="translate(432.30 231.60) scale(0.4135)" fill="#13b548"><path d="M24,0.4 L358.5,0.4 L357.4,3.9 L26,3.9 C17.5,3.9 12.2,10 12.2,22 L11.6,31 L3.2,31 L3.7,22 C3.7,8 10,0.4 24,0.4 Z"/><path d="M351,0.4 L358.5,0.4 L346.5,39.6 L339,39.6 Z"/><path d="M0,36 L345,36 L344,39.6 L0,39.6 Z"/><text transform="scale(2.0121 1)" x="8.95 29.32 48.21 70.57 87.47 104.87 122.76 131.70 149.10" y="29.6" font-family='"Liberation Sans",sans-serif' font-weight="bold" font-style="italic" font-size="26.5" fill="#2c4a34" stroke="#13b548" stroke-width="2.2">CROSSFIRE</text></g>
<circle cx="584.6" cy="234.3" r="2.3" fill="none" stroke="#13b548" stroke-width="0.8"/>
<path d="M166,265.1 L175.3,265.1 L170.65,270.9 Z" fill="#1c1c1c"/>
<defs><linearGradient id="cb" x1="0" x2="1" y1="0" y2="0"><stop offset="0" stop-color="#4e4e4e"/><stop offset="0.2" stop-color="#5d5d5d"/><stop offset="0.55" stop-color="#676767"/><stop offset="0.85" stop-color="#5e5e5e"/><stop offset="1" stop-color="#4c4c4c"/></linearGradient><linearGradient id="cw" x1="0" x2="0" y1="0" y2="1"><stop offset="0" stop-color="#a89e80"/><stop offset="1" stop-color="#a09878"/></linearGradient></defs><path d="M141,348.3 C160,348.3 172,351 178,358 C181,362 181.6,370 181.6,380 L181.6,500 C181.6,515 178,525 170,530 C160,534 122,534 112,530 C104,525 100.6,515 100.6,500 L100.6,380 C100.6,370 101,362 104,358 C110,351 122,348.3 141,348.3 Z" fill="url(#cb)" stroke="#343434" stroke-width="1.1"/><rect x="100.0" y="364.0" width="2.9" height="31.0" rx="1.4" fill="#1e1e1e"/><rect x="179.2" y="364.0" width="2.9" height="31.0" rx="1.4" fill="#1e1e1e"/><rect x="100.0" y="485.0" width="2.9" height="29.0" rx="1.4" fill="#1e1e1e"/><rect x="179.4" y="485.0" width="2.9" height="29.0" rx="1.4" fill="#1e1e1e"/><rect x="124" y="348.9" width="34.5" height="7" rx="3.5" fill="#dcdcdc"/><rect x="127" y="351" width="28.5" height="3" rx="1.5" fill="#bdbdbd"/><path d="M106.4,365 L119,354.5 L117,366 L109,375 Z" fill="#7d7b6c"/><path d="M175.6,365 L163,354.5 L165,366 L173,375 Z" fill="#7d7b6c"/><rect x="97" y="417" width="9.5" height="2.4" rx="1.2" fill="#8a8a8a"/><rect x="176.5" y="417" width="8" height="2.4" rx="1.2" fill="#8a8a8a"/><path d="M111.5,404 C122,395.5 160,395.5 170.5,404 C175,412 176,430 176,450 L176,480 C175,495 172,503 168,508 L114,508 C110,503 107,495 106,480 L106,450 C106,430 107,412 111.5,404 Z" fill="#585858" stroke="#2e2e2e" stroke-width="0.9"/><path d="M112.5,404.5 C123,397.5 159,397.5 169.5,404.5 L167,416.5 L115,416.5 Z" fill="#4f4f52"/><path d="M113,406 C125,405 132,411 137,414 L145,414 C150,411 157,405 169,406" fill="none" stroke="#4a5088" stroke-width="0.8"/><rect x="136.5" y="403" width="8.5" height="11" fill="#6b6448"/><circle cx="117.0" cy="411.0" r="1.2" fill="#666c94"/><circle cx="121.5" cy="411.0" r="1.2" fill="#666c94"/><circle cx="126.0" cy="412.0" r="1.2" fill="#666c94"/><circle cx="129.5" cy="414.0" r="1.2" fill="#666c94"/><circle cx="152.0" cy="414.0" r="1.2" fill="#666c94"/><circle cx="155.5" cy="412.0" r="1.2" fill="#666c94"/><circle cx="160.0" cy="411.0" r="1.2" fill="#666c94"/><circle cx="164.5" cy="411.0" r="1.2" fill="#666c94"/><path d="M115,416.5 L167,416.5 L164.5,431 L117.5,431 Z" fill="url(#cw)"/><path d="M133,418 L164,418 L163,430 L133,430 Z" fill="#b89878" opacity="0.5"/><ellipse cx="125" cy="420.5" rx="8.5" ry="2" fill="#3e3e3e"/><path d="M117.5,431 L164.5,431 C163,437 159,438.5 153,438.5 L129,438.5 C123,438.5 119,437 117.5,431 Z" fill="#020202"/><path d="M118,438 C124,440 158,440 164,438 C166,450 166,465 164,475 L118,475 C116,465 116,450 118,438 Z" fill="#626262"/><path d="M108.5,420 C112,424 114.5,432 115.5,442 L115.5,470 L109,466 C108,450 108,435 108.5,420 Z" fill="#6e5e40" stroke="#262626" stroke-width="1"/><path d="M173.5,420 C170,424 167.5,432 166.5,442 L166.5,470 L173,466 C174,450 174,435 173.5,420 Z" fill="#7c6e50" stroke="#262626" stroke-width="1"/><path d="M109.5,473 L115.5,476 L114.5,494 C111.5,488 110,481 109.5,473 Z" fill="#7a5a3a" stroke="#2e2e2e" stroke-width="0.7"/><path d="M172.5,473 L166.5,476 L167.5,494 C170.5,488 172,481 172.5,473 Z" fill="#8a7a50" stroke="#2e2e2e" stroke-width="0.7"/><path d="M125,468.3 L157,468.3 Q159.8,468.3 159.8,471 L159.8,492 C159.8,503 152,508.6 141,508.6 C130,508.6 122.2,503 122.2,492 L122.2,471 Q122.2,468.3 125,468.3 Z" fill="#b3aa8a" stroke="#333" stroke-width="1"/><rect x="122.8" y="469" width="36.4" height="9" fill="#c0b49a" opacity="0.7"/><path d="M122.8,478.5 C133,477 149,477 159.2,478.5 L159.2,485 C149,483.3 133,483.3 122.8,485 Z" fill="#a8765a"/><rect x="129" y="484" width="2" height="7" fill="#b08866"/><rect x="151" y="484" width="2" height="7" fill="#b08866"/><path d="M107.5,506 C110,508 114,512 116,516 L116,527 C111,525 108,519 107.5,506 Z" fill="#7c7c7c"/><path d="M174.7,506 C172,508 168,512 166,516 L166,527 C171,525 174,519 174.7,506 Z" fill="#7c7c7c"/><circle cx="172" cy="497" r="3" fill="none" stroke="#6c6c6c" stroke-width="0.5"/><rect x="119.5" y="516" width="42.5" height="3.2" fill="#c4ccd4"/><rect x="121" y="516.6" width="11.5" height="2" fill="#e09858"/><rect x="149" y="516.6" width="11.5" height="2" fill="#e09858"/><rect x="118" y="522.3" width="46" height="5" rx="2.5" fill="#060606"/><rect x="128.5" y="528.3" width="25" height="1.6" fill="#b8a820"/>
<path d="M141.4,337 L141.4,554.3 M45.3,456.4 L242,456.4" stroke="#0aea22" stroke-width="1.5" fill="none"/>
<circle cx="141.4" cy="456.4" r="8.4" fill="#ffffff"/>
<circle cx="69.6" cy="610" r="6.4" fill="#1e1e1e"/>
<circle cx="69.6" cy="610" r="4.1" fill="#e2512c"/>
<circle cx="69.0" cy="609" r="2.2" fill="#ffffff" opacity="0.18"/>
<circle cx="128.6" cy="610" r="6.4" fill="#1e1e1e"/>
<circle cx="128.6" cy="610" r="4.1" fill="#9a9a9a"/>
<circle cx="128.0" cy="609" r="2.2" fill="#ffffff" opacity="0.18"/>
<circle cx="180.6" cy="610" r="6.4" fill="#1e1e1e"/>
<circle cx="180.6" cy="610" r="4.1" fill="#9a9a9a"/>
<circle cx="180.0" cy="609" r="2.2" fill="#ffffff" opacity="0.18"/>
<g transform="translate(468.00 343.00) scale(1.0000)" fill="#0b4523"><path d="M24,0.4 L358.5,0.4 L357.4,3.9 L26,3.9 C17.5,3.9 12.2,10 12.2,22 L11.6,31 L3.2,31 L3.7,22 C3.7,8 10,0.4 24,0.4 Z"/><path d="M351,0.4 L358.5,0.4 L346.5,39.6 L339,39.6 Z"/><path d="M0,36 L345,36 L344,39.6 L0,39.6 Z"/><text transform="scale(1.7200 1)" x="10.47 34.30 56.40 82.56 102.33 122.67 143.60 154.07 174.42" y="31" font-family='"Liberation Sans",sans-serif' font-weight="bold" font-style="italic" font-size="31" stroke="#0b4523" stroke-width="1.1">CROSSFIRE</text><circle cx="368.5" cy="7" r="5.6" fill="none" stroke="#0b4523" stroke-width="1.3"/><text x="368.5" y="10.4" font-family='"Liberation Sans",sans-serif' font-size="9.5" text-anchor="middle">R</text></g><path d="M326.75,292.50 L326.75,437.30 M365.10,292.50 L365.10,437.30 M392.31,292.50 L392.31,437.30 M413.42,292.50 L413.42,437.30 M430.67,292.50 L430.67,437.30 M445.25,292.50 L445.25,437.30 M457.88,292.50 L457.88,437.30 M469.02,292.50 L469.02,437.30 M478.99,292.50 L478.99,437.30 M544.55,292.50 L544.55,437.30 M582.90,292.50 L582.90,437.30 M610.11,292.50 L610.11,437.30 M631.22,292.50 L631.22,437.30 M648.47,292.50 L648.47,437.30 M663.05,292.50 L663.05,437.30 M675.68,292.50 L675.68,437.30 M686.82,292.50 L686.82,437.30 M696.79,292.50 L696.79,437.30 M762.35,292.50 L762.35,437.30 M800.70,292.50 L800.70,437.30 M827.91,292.50 L827.91,437.30 M849.02,292.50 L849.02,437.30 M866.27,292.50 L866.27,437.30 M880.85,292.50 L880.85,437.30 M893.48,292.50 L893.48,437.30 M904.62,292.50 L904.62,437.30 M914.59,292.50 L914.59,437.30 M980.15,292.50 L980.15,437.30 M326.75,292.50 L980.15,292.50 M326.75,310.60 L980.15,310.60 M326.75,328.70 L980.15,328.70 M326.75,346.80 L980.15,346.80 M326.75,383.00 L980.15,383.00 M326.75,401.10 L980.15,401.10 M326.75,419.20 L980.15,419.20 M326.75,437.30 L980.15,437.30 " stroke="#6a6a6a" stroke-width="1" fill="none"/><rect x="326.75" y="292.50" width="653.40" height="144.80" fill="none" stroke="#8e8e8e" stroke-width="1"/><path d="M326.75,365.20 L980.15,365.20" stroke="#5f7080" stroke-width="1.5" fill="none"/><path d="M359.70,437.20 L367.60,429.00 L376.40,420.20 L385.20,411.90 L393.90,404.30 L402.70,397.30 L411.50,390.80 L420.30,385.00 L429.10,379.90 L437.90,375.70 L446.70,372.70 L455.50,370.40 L464.30,369.00 L473.00,368.00 L481.80,367.10 L490.60,366.50 L508.20,365.90 L525.80,365.60 L980.20,365.60" stroke="#00c000" stroke-width="1.6" fill="none" stroke-linejoin="round"/><g font-family='"Liberation Sans",sans-serif' font-weight="bold" letter-spacing="1.15"><text transform="translate(297.50 299.20) scale(0.860 1)" fill="#9c9c9c" text-anchor="start" font-size="12" >+12</text><text transform="translate(297.50 315.50) scale(0.860 1)" fill="#9c9c9c" text-anchor="start" font-size="12" >+9</text><text transform="translate(297.50 333.20) scale(0.860 1)" fill="#9c9c9c" text-anchor="start" font-size="12" >+6</text><text transform="translate(297.50 351.20) scale(0.860 1)" fill="#9c9c9c" text-anchor="start" font-size="12" >+3</text><text transform="translate(297.50 369.50) scale(0.860 1)" fill="#9c9c9c" text-anchor="start" font-size="12" >0dB</text><text transform="translate(297.50 387.00) scale(0.860 1)" fill="#9c9c9c" text-anchor="start" font-size="12" >-3</text><text transform="translate(297.50 404.50) scale(0.860 1)" fill="#9c9c9c" text-anchor="start" font-size="12" >-6</text><text transform="translate(297.50 422.70) scale(0.860 1)" fill="#9c9c9c" text-anchor="start" font-size="12" >-9</text><text transform="translate(297.50 440.20) scale(0.860 1)" fill="#9c9c9c" text-anchor="start" font-size="12" >-12</text><text transform="translate(324.95 449.10) scale(0.860 1)" fill="#f4f4f4" text-anchor="middle" font-size="12" >20</text><text transform="translate(365.10 449.10) scale(0.860 1)" fill="#f4f4f4" text-anchor="middle" font-size="12" >30</text><text transform="translate(392.81 449.10) scale(0.860 1)" fill="#f4f4f4" text-anchor="middle" font-size="12" >40</text><text transform="translate(412.72 449.10) scale(0.860 1)" fill="#f4f4f4" text-anchor="middle" font-size="12" >50</text><text transform="translate(445.75 449.10) scale(0.860 1)" fill="#f4f4f4" text-anchor="middle" font-size="12" >70</text><text transform="translate(480.69 449.10) scale(0.860 1)" fill="#f4f4f4" text-anchor="middle" font-size="12" >100</text><text transform="translate(546.05 449.10) scale(0.860 1)" fill="#f4f4f4" text-anchor="middle" font-size="12" >200</text><text transform="translate(584.40 449.10) scale(0.860 1)" fill="#f4f4f4" text-anchor="middle" font-size="12" >300</text><text transform="translate(632.72 449.10) scale(0.860 1)" fill="#f4f4f4" text-anchor="middle" font-size="12" >500</text><text transform="translate(664.55 449.10) scale(0.860 1)" fill="#f4f4f4" text-anchor="middle" font-size="12" >700</text><text transform="translate(697.79 449.10) scale(0.860 1)" fill="#f4f4f4" text-anchor="middle" font-size="12" >1K</text><text transform="translate(763.95 449.10) scale(0.860 1)" fill="#f4f4f4" text-anchor="middle" font-size="12" >2K</text><text transform="translate(802.70 449.10) scale(0.860 1)" fill="#f4f4f4" text-anchor="middle" font-size="12" >3K</text><text transform="translate(829.71 449.10) scale(0.860 1)" fill="#f4f4f4" text-anchor="middle" font-size="12" >4K</text><text transform="translate(850.52 449.10) scale(0.860 1)" fill="#f4f4f4" text-anchor="middle" font-size="12" >5K</text><text transform="translate(882.65 449.10) scale(0.860 1)" fill="#f4f4f4" text-anchor="middle" font-size="12" >7K</text><text transform="translate(917.29 449.10) scale(0.860 1)" fill="#f4f4f4" text-anchor="middle" font-size="12" >10K</text><text transform="translate(977.05 449.10) scale(0.860 1)" fill="#f4f4f4" text-anchor="middle" font-size="12" >20K</text><text transform="translate(367.10 369.90) scale(0.860 1)" fill="#f01414" text-anchor="middle" font-size="12" >1</text><text transform="translate(438.14 369.90) scale(0.860 1)" fill="#f4f4f4" text-anchor="middle" font-size="12" >2</text><text transform="translate(499.99 369.90) scale(0.860 1)" fill="#f4f4f4" text-anchor="middle" font-size="12" >3</text><text transform="translate(565.76 369.90) scale(0.860 1)" fill="#f4f4f4" text-anchor="middle" font-size="12" >4</text><text transform="translate(631.32 369.90) scale(0.860 1)" fill="#f4f4f4" text-anchor="middle" font-size="12" >5</text><text transform="translate(696.89 369.90) scale(0.860 1)" fill="#f4f4f4" text-anchor="middle" font-size="12" >6</text><text transform="translate(762.45 369.90) scale(0.860 1)" fill="#f4f4f4" text-anchor="middle" font-size="12" >7</text><text transform="translate(828.01 369.90) scale(0.860 1)" fill="#f4f4f4" text-anchor="middle" font-size="12" >8</text><text transform="translate(893.58 369.90) scale(0.860 1)" fill="#f4f4f4" text-anchor="middle" font-size="12" >9</text><text transform="translate(959.14 369.90) scale(0.860 1)" fill="#f4f4f4" text-anchor="middle" font-size="12" >10</text><text transform="translate(331.00 390.80) scale(0.860 1)" fill="#f01010" text-anchor="start" font-size="12" >31Hz 2.201Q 0.0dB</text><text transform="translate(445.10 418.20) scale(0.860 1)" fill="#f4f4f4" text-anchor="middle" font-size="12" >H</text><text transform="translate(977.80 437.20) scale(0.860 1)" fill="#f4f4f4" text-anchor="middle" font-size="12" >L</text></g><rect x="334.3" y="370.9" width="6.6" height="6.6" fill="#55626e" stroke="#c21c1c" stroke-width="1"/><rect x="392.3" y="370.9" width="6.6" height="6.6" fill="#55626e" stroke="#c21c1c" stroke-width="1"/><g font-family='"Liberation Sans",sans-serif' font-size="10" fill="#a9b4b4" text-anchor="middle" letter-spacing="-0.2"><rect x="991.4" y="296.30" width="24.4" height="13" fill="#000" stroke="#6c7a7a" stroke-width="1"/><text x="1003.5" y="306.50">CH1</text><rect x="991.4" y="323.50" width="24.4" height="13" fill="#000" stroke="#6c7a7a" stroke-width="1"/><text x="1003.5" y="333.70">CH2</text><rect x="991.4" y="350.70" width="24.4" height="13" fill="#000" stroke="#6c7a7a" stroke-width="1"/><text x="1003.5" y="360.90">CH3</text><rect x="991.4" y="377.90" width="24.4" height="13" fill="#000" stroke="#6c7a7a" stroke-width="1"/><text x="1003.5" y="388.10">CH4</text><rect x="991.4" y="405.10" width="24.4" height="13" fill="#000" stroke="#6c7a7a" stroke-width="1"/><text x="1003.5" y="415.30">CH5</text><rect x="991.4" y="432.30" width="24.4" height="13" fill="#000" stroke="#6c7a7a" stroke-width="1"/><text x="1003.5" y="442.50">CH6</text></g>
<rect x="371.30" y="539" width="4.6" height="70.6" rx="2.3" fill="#2f2f2f"/><g transform="translate(366.70 565.80) scale(0.8625 0.7418)"><rect x="0" y="0" width="16" height="24.4" rx="1.2" fill="#1a569c"/><path d="M0,1 Q0,0 1,0 L15,0 Q15.8,0 15.6,0.8 L14.3,3.4 L2,3.4 L2,20.5 L4.2,20.5 L0.7,24.4 Q0,24.4 0,23.6 Z" fill="#aed6fb"/><rect x="2" y="3.5" width="12.3" height="7.4" fill="#1f5a98"/><rect x="2" y="7.6" width="12.3" height="3.3" fill="#2c66a6"/><rect x="2" y="10.6" width="12.3" height="0.9" fill="#16488a"/><rect x="1.3" y="11.5" width="14" height="1.5" fill="#e9edf1"/><rect x="2" y="13" width="12.3" height="7.5" fill="#3c78b8"/><rect x="2" y="15.5" width="12.3" height="1.1" fill="#9fc6ee"/><rect x="2" y="17.9" width="12.3" height="1.4" fill="#8eaed4"/><rect x="2" y="19.2" width="12.3" height="1.3" fill="#e2eaf2"/><path d="M4.2,20.5 L16,20.5 L16,23.2 Q16,24.4 14.8,24.4 L0.7,24.4 Z" fill="#0e4a92"/></g><circle cx="373.80" cy="619.8" r="6.4" fill="#272727"/><circle cx="373.80" cy="619.9" r="4.5" fill="#363636"/><circle cx="374.10" cy="620.3" r="3.5" fill="#151515"/><rect x="408.30" y="539" width="4.6" height="70.6" rx="2.3" fill="#2f2f2f"/><g transform="translate(403.70 565.80) scale(0.8625 0.7418)"><rect x="0" y="0" width="16" height="24.4" rx="1.2" fill="#1a569c"/><path d="M0,1 Q0,0 1,0 L15,0 Q15.8,0 15.6,0.8 L14.3,3.4 L2,3.4 L2,20.5 L4.2,20.5 L0.7,24.4 Q0,24.4 0,23.6 Z" fill="#aed6fb"/><rect x="2" y="3.5" width="12.3" height="7.4" fill="#1f5a98"/><rect x="2" y="7.6" width="12.3" height="3.3" fill="#2c66a6"/><rect x="2" y="10.6" width="12.3" height="0.9" fill="#16488a"/><rect x="1.3" y="11.5" width="14" height="1.5" fill="#e9edf1"/><rect x="2" y="13" width="12.3" height="7.5" fill="#3c78b8"/><rect x="2" y="15.5" width="12.3" height="1.1" fill="#9fc6ee"/><rect x="2" y="17.9" width="12.3" height="1.4" fill="#8eaed4"/><rect x="2" y="19.2" width="12.3" height="1.3" fill="#e2eaf2"/><path d="M4.2,20.5 L16,20.5 L16,23.2 Q16,24.4 14.8,24.4 L0.7,24.4 Z" fill="#0e4a92"/></g><circle cx="410.80" cy="619.8" r="6.4" fill="#272727"/><circle cx="410.80" cy="619.9" r="4.5" fill="#363636"/><circle cx="411.10" cy="620.3" r="3.5" fill="#151515"/><rect x="445.30" y="539" width="4.6" height="70.6" rx="2.3" fill="#2f2f2f"/><g transform="translate(440.70 565.80) scale(0.8625 0.7418)"><rect x="0" y="0" width="16" height="24.4" rx="1.2" fill="#1a569c"/><path d="M0,1 Q0,0 1,0 L15,0 Q15.8,0 15.6,0.8 L14.3,3.4 L2,3.4 L2,20.5 L4.2,20.5 L0.7,24.4 Q0,24.4 0,23.6 Z" fill="#aed6fb"/><rect x="2" y="3.5" width="12.3" height="7.4" fill="#1f5a98"/><rect x="2" y="7.6" width="12.3" height="3.3" fill="#2c66a6"/><rect x="2" y="10.6" width="12.3" height="0.9" fill="#16488a"/><rect x="1.3" y="11.5" width="14" height="1.5" fill="#e9edf1"/><rect x="2" y="13" width="12.3" height="7.5" fill="#3c78b8"/><rect x="2" y="15.5" width="12.3" height="1.1" fill="#9fc6ee"/><rect x="2" y="17.9" width="12.3" height="1.4" fill="#8eaed4"/><rect x="2" y="19.2" width="12.3" height="1.3" fill="#e2eaf2"/><path d="M4.2,20.5 L16,20.5 L16,23.2 Q16,24.4 14.8,24.4 L0.7,24.4 Z" fill="#0e4a92"/></g><circle cx="447.80" cy="619.8" r="6.4" fill="#272727"/><circle cx="447.80" cy="619.9" r="4.5" fill="#363636"/><circle cx="448.10" cy="620.3" r="3.5" fill="#151515"/><rect x="482.70" y="539" width="4.6" height="70.6" rx="2.3" fill="#2f2f2f"/><g transform="translate(478.10 565.80) scale(0.8625 0.7418)"><rect x="0" y="0" width="16" height="24.4" rx="1.2" fill="#1a569c"/><path d="M0,1 Q0,0 1,0 L15,0 Q15.8,0 15.6,0.8 L14.3,3.4 L2,3.4 L2,20.5 L4.2,20.5 L0.7,24.4 Q0,24.4 0,23.6 Z" fill="#aed6fb"/><rect x="2" y="3.5" width="12.3" height="7.4" fill="#1f5a98"/><rect x="2" y="7.6" width="12.3" height="3.3" fill="#2c66a6"/><rect x="2" y="10.6" width="12.3" height="0.9" fill="#16488a"/><rect x="1.3" y="11.5" width="14" height="1.5" fill="#e9edf1"/><rect x="2" y="13" width="12.3" height="7.5" fill="#3c78b8"/><rect x="2" y="15.5" width="12.3" height="1.1" fill="#9fc6ee"/><rect x="2" y="17.9" width="12.3" height="1.4" fill="#8eaed4"/><rect x="2" y="19.2" width="12.3" height="1.3" fill="#e2eaf2"/><path d="M4.2,20.5 L16,20.5 L16,23.2 Q16,24.4 14.8,24.4 L0.7,24.4 Z" fill="#0e4a92"/></g><circle cx="485.20" cy="619.8" r="6.4" fill="#272727"/><circle cx="485.20" cy="619.9" r="4.5" fill="#363636"/><circle cx="485.50" cy="620.3" r="3.5" fill="#151515"/><rect x="520.00" y="539" width="4.6" height="70.6" rx="2.3" fill="#2f2f2f"/><g transform="translate(515.40 565.80) scale(0.8625 0.7418)"><rect x="0" y="0" width="16" height="24.4" rx="1.2" fill="#1a569c"/><path d="M0,1 Q0,0 1,0 L15,0 Q15.8,0 15.6,0.8 L14.3,3.4 L2,3.4 L2,20.5 L4.2,20.5 L0.7,24.4 Q0,24.4 0,23.6 Z" fill="#aed6fb"/><rect x="2" y="3.5" width="12.3" height="7.4" fill="#1f5a98"/><rect x="2" y="7.6" width="12.3" height="3.3" fill="#2c66a6"/><rect x="2" y="10.6" width="12.3" height="0.9" fill="#16488a"/><rect x="1.3" y="11.5" width="14" height="1.5" fill="#e9edf1"/><rect x="2" y="13" width="12.3" height="7.5" fill="#3c78b8"/><rect x="2" y="15.5" width="12.3" height="1.1" fill="#9fc6ee"/><rect x="2" y="17.9" width="12.3" height="1.4" fill="#8eaed4"/><rect x="2" y="19.2" width="12.3" height="1.3" fill="#e2eaf2"/><path d="M4.2,20.5 L16,20.5 L16,23.2 Q16,24.4 14.8,24.4 L0.7,24.4 Z" fill="#0e4a92"/></g><circle cx="522.50" cy="619.8" r="6.4" fill="#272727"/><circle cx="522.50" cy="619.9" r="4.5" fill="#363636"/><circle cx="522.80" cy="620.3" r="3.5" fill="#151515"/><rect x="559.50" y="539" width="4.6" height="70.6" rx="2.3" fill="#2f2f2f"/><g transform="translate(554.90 565.80) scale(0.8625 0.7418)"><rect x="0" y="0" width="16" height="24.4" rx="1.2" fill="#1a569c"/><path d="M0,1 Q0,0 1,0 L15,0 Q15.8,0 15.6,0.8 L14.3,3.4 L2,3.4 L2,20.5 L4.2,20.5 L0.7,24.4 Q0,24.4 0,23.6 Z" fill="#aed6fb"/><rect x="2" y="3.5" width="12.3" height="7.4" fill="#1f5a98"/><rect x="2" y="7.6" width="12.3" height="3.3" fill="#2c66a6"/><rect x="2" y="10.6" width="12.3" height="0.9" fill="#16488a"/><rect x="1.3" y="11.5" width="14" height="1.5" fill="#e9edf1"/><rect x="2" y="13" width="12.3" height="7.5" fill="#3c78b8"/><rect x="2" y="15.5" width="12.3" height="1.1" fill="#9fc6ee"/><rect x="2" y="17.9" width="12.3" height="1.4" fill="#8eaed4"/><rect x="2" y="19.2" width="12.3" height="1.3" fill="#e2eaf2"/><path d="M4.2,20.5 L16,20.5 L16,23.2 Q16,24.4 14.8,24.4 L0.7,24.4 Z" fill="#0e4a92"/></g><circle cx="562.00" cy="619.8" r="6.4" fill="#272727"/><circle cx="562.00" cy="619.9" r="4.5" fill="#363636"/><circle cx="562.30" cy="620.3" r="3.5" fill="#151515"/><rect x="597.00" y="539" width="4.6" height="70.6" rx="2.3" fill="#2f2f2f"/><g transform="translate(592.40 565.80) scale(0.8625 0.7418)"><rect x="0" y="0" width="16" height="24.4" rx="1.2" fill="#1a569c"/><path d="M0,1 Q0,0 1,0 L15,0 Q15.8,0 15.6,0.8 L14.3,3.4 L2,3.4 L2,20.5 L4.2,20.5 L0.7,24.4 Q0,24.4 0,23.6 Z" fill="#aed6fb"/><rect x="2" y="3.5" width="12.3" height="7.4" fill="#1f5a98"/><rect x="2" y="7.6" width="12.3" height="3.3" fill="#2c66a6"/><rect x="2" y="10.6" width="12.3" height="0.9" fill="#16488a"/><rect x="1.3" y="11.5" width="14" height="1.5" fill="#e9edf1"/><rect x="2" y="13" width="12.3" height="7.5" fill="#3c78b8"/><rect x="2" y="15.5" width="12.3" height="1.1" fill="#9fc6ee"/><rect x="2" y="17.9" width="12.3" height="1.4" fill="#8eaed4"/><rect x="2" y="19.2" width="12.3" height="1.3" fill="#e2eaf2"/><path d="M4.2,20.5 L16,20.5 L16,23.2 Q16,24.4 14.8,24.4 L0.7,24.4 Z" fill="#0e4a92"/></g><circle cx="599.50" cy="619.8" r="6.4" fill="#272727"/><circle cx="599.50" cy="619.9" r="4.5" fill="#363636"/><circle cx="599.80" cy="620.3" r="3.5" fill="#151515"/><rect x="634.50" y="539" width="4.6" height="70.6" rx="2.3" fill="#2f2f2f"/><g transform="translate(629.90 565.80) scale(0.8625 0.7418)"><rect x="0" y="0" width="16" height="24.4" rx="1.2" fill="#1a569c"/><path d="M0,1 Q0,0 1,0 L15,0 Q15.8,0 15.6,0.8 L14.3,3.4 L2,3.4 L2,20.5 L4.2,20.5 L0.7,24.4 Q0,24.4 0,23.6 Z" fill="#aed6fb"/><rect x="2" y="3.5" width="12.3" height="7.4" fill="#1f5a98"/><rect x="2" y="7.6" width="12.3" height="3.3" fill="#2c66a6"/><rect x="2" y="10.6" width="12.3" height="0.9" fill="#16488a"/><rect x="1.3" y="11.5" width="14" height="1.5" fill="#e9edf1"/><rect x="2" y="13" width="12.3" height="7.5" fill="#3c78b8"/><rect x="2" y="15.5" width="12.3" height="1.1" fill="#9fc6ee"/><rect x="2" y="17.9" width="12.3" height="1.4" fill="#8eaed4"/><rect x="2" y="19.2" width="12.3" height="1.3" fill="#e2eaf2"/><path d="M4.2,20.5 L16,20.5 L16,23.2 Q16,24.4 14.8,24.4 L0.7,24.4 Z" fill="#0e4a92"/></g><circle cx="637.00" cy="619.8" r="6.4" fill="#272727"/><circle cx="637.00" cy="619.9" r="4.5" fill="#363636"/><circle cx="637.30" cy="620.3" r="3.5" fill="#151515"/><rect x="671.00" y="539" width="4.6" height="70.6" rx="2.3" fill="#2f2f2f"/><g transform="translate(666.40 565.80) scale(0.8625 0.7418)"><rect x="0" y="0" width="16" height="24.4" rx="1.2" fill="#1a569c"/><path d="M0,1 Q0,0 1,0 L15,0 Q15.8,0 15.6,0.8 L14.3,3.4 L2,3.4 L2,20.5 L4.2,20.5 L0.7,24.4 Q0,24.4 0,23.6 Z" fill="#aed6fb"/><rect x="2" y="3.5" width="12.3" height="7.4" fill="#1f5a98"/><rect x="2" y="7.6" width="12.3" height="3.3" fill="#2c66a6"/><rect x="2" y="10.6" width="12.3" height="0.9" fill="#16488a"/><rect x="1.3" y="11.5" width="14" height="1.5" fill="#e9edf1"/><rect x="2" y="13" width="12.3" height="7.5" fill="#3c78b8"/><rect x="2" y="15.5" width="12.3" height="1.1" fill="#9fc6ee"/><rect x="2" y="17.9" width="12.3" height="1.4" fill="#8eaed4"/><rect x="2" y="19.2" width="12.3" height="1.3" fill="#e2eaf2"/><path d="M4.2,20.5 L16,20.5 L16,23.2 Q16,24.4 14.8,24.4 L0.7,24.4 Z" fill="#0e4a92"/></g><circle cx="673.50" cy="619.8" r="6.4" fill="#272727"/><circle cx="673.50" cy="619.9" r="4.5" fill="#363636"/><circle cx="673.80" cy="620.3" r="3.5" fill="#151515"/><rect x="709.00" y="539" width="4.6" height="70.6" rx="2.3" fill="#2f2f2f"/><g transform="translate(704.40 565.80) scale(0.8625 0.7418)"><rect x="0" y="0" width="16" height="24.4" rx="1.2" fill="#1a569c"/><path d="M0,1 Q0,0 1,0 L15,0 Q15.8,0 15.6,0.8 L14.3,3.4 L2,3.4 L2,20.5 L4.2,20.5 L0.7,24.4 Q0,24.4 0,23.6 Z" fill="#aed6fb"/><rect x="2" y="3.5" width="12.3" height="7.4" fill="#1f5a98"/><rect x="2" y="7.6" width="12.3" height="3.3" fill="#2c66a6"/><rect x="2" y="10.6" width="12.3" height="0.9" fill="#16488a"/><rect x="1.3" y="11.5" width="14" height="1.5" fill="#e9edf1"/><rect x="2" y="13" width="12.3" height="7.5" fill="#3c78b8"/><rect x="2" y="15.5" width="12.3" height="1.1" fill="#9fc6ee"/><rect x="2" y="17.9" width="12.3" height="1.4" fill="#8eaed4"/><rect x="2" y="19.2" width="12.3" height="1.3" fill="#e2eaf2"/><path d="M4.2,20.5 L16,20.5 L16,23.2 Q16,24.4 14.8,24.4 L0.7,24.4 Z" fill="#0e4a92"/></g><circle cx="711.50" cy="619.8" r="6.4" fill="#272727"/><circle cx="711.50" cy="619.9" r="4.5" fill="#363636"/><circle cx="711.80" cy="620.3" r="3.5" fill="#151515"/><path d="M334.8,535.5 L334.8,491.5 L351,478.8" fill="none" stroke="#5c5c5c" stroke-width="1"/><path d="M358.3,473.6 L348.5,475.6 L353.6,482.4 Z" fill="#5c5c5c"/><path d="M753.3,535.5 L753.3,491.5 L737.2,478.8" fill="none" stroke="#5c5c5c" stroke-width="1"/><path d="M729.9,473.6 L739.7,475.6 L734.6,482.4 Z" fill="#5c5c5c"/><path d="M780.3,468 L780.3,628" stroke="#555" stroke-width="1"/>
<path d="M854.8,515.6 L877.3,494.8 L918,494.8 M948,494.8 L989.3,494.8 L1011,515.6" fill="none" stroke="#e58410" stroke-width="2.1"/>
<path d="M913.80,541.00 l7.6,0 l-3.8,5 Z" fill="#1a1a1a"/><path d="M913.80,614.80 l7.6,0 l-3.8,5 Z" fill="#1a1a1a"/><path d="M993.80,541.00 l7.6,0 l-3.8,5 Z" fill="#1a1a1a"/><path d="M993.80,614.80 l7.6,0 l-3.8,5 Z" fill="#1a1a1a"/>
<rect x="26.10" y="702.78" width="5.20" height="1.15" fill="#b4b4b4"/><rect x="28.50" y="708.21" width="2.80" height="1.15" fill="#b4b4b4"/><rect x="28.50" y="713.64" width="2.80" height="1.15" fill="#b4b4b4"/><rect x="28.50" y="719.07" width="2.80" height="1.15" fill="#b4b4b4"/><rect x="28.50" y="724.50" width="2.80" height="1.15" fill="#b4b4b4"/><rect x="26.10" y="729.93" width="5.20" height="1.15" fill="#b4b4b4"/><rect x="28.50" y="735.36" width="2.80" height="1.15" fill="#b4b4b4"/><rect x="28.50" y="740.79" width="2.80" height="1.15" fill="#b4b4b4"/><rect x="28.50" y="746.22" width="2.80" height="1.15" fill="#b4b4b4"/><rect x="28.50" y="751.65" width="2.80" height="1.15" fill="#b4b4b4"/><rect x="26.10" y="757.08" width="5.20" height="1.15" fill="#b4b4b4"/><rect x="28.50" y="762.51" width="2.80" height="1.15" fill="#b4b4b4"/><rect x="28.50" y="767.94" width="2.80" height="1.15" fill="#b4b4b4"/><rect x="28.50" y="773.37" width="2.80" height="1.15" fill="#b4b4b4"/><rect x="28.50" y="778.80" width="2.80" height="1.15" fill="#b4b4b4"/><rect x="26.10" y="784.23" width="5.20" height="1.15" fill="#b4b4b4"/><path d="M40.20,712.50 L43.60,712.50 L40.20,782.30 Z" fill="#7a7a7a"/><rect x="35.80" y="712.50" width="2.3" height="74.60" fill="#241c1c"/><rect x="38.10" y="712.50" width="2.1" height="75.80" fill="#d4d4d4"/><rect x="35.60" y="787.10" width="4.6" height="1.7" fill="#f0f0f0"/><g transform="translate(33.00 692.50) scale(1.0063 0.9918)"><rect x="0" y="0" width="16" height="24.4" rx="1.2" fill="#1a569c"/><path d="M0,1 Q0,0 1,0 L15,0 Q15.8,0 15.6,0.8 L14.3,3.4 L2,3.4 L2,20.5 L4.2,20.5 L0.7,24.4 Q0,24.4 0,23.6 Z" fill="#aed6fb"/><rect x="2" y="3.5" width="12.3" height="7.4" fill="#1f5a98"/><rect x="2" y="7.6" width="12.3" height="3.3" fill="#2c66a6"/><rect x="2" y="10.6" width="12.3" height="0.9" fill="#16488a"/><rect x="1.3" y="11.5" width="14" height="1.5" fill="#e9edf1"/><rect x="2" y="13" width="12.3" height="7.5" fill="#3c78b8"/><rect x="2" y="15.5" width="12.3" height="1.1" fill="#9fc6ee"/><rect x="2" y="17.9" width="12.3" height="1.4" fill="#8eaed4"/><rect x="2" y="19.2" width="12.3" height="1.3" fill="#e2eaf2"/><path d="M4.2,20.5 L16,20.5 L16,23.2 Q16,24.4 14.8,24.4 L0.7,24.4 Z" fill="#0e4a92"/></g><g transform="translate(93.60 759.50)" fill="#c8c8c8"><path d="M-10.5,-3 L-7.6,-3 L-2.6,-7 L-2.6,7 L-7.6,3 L-10.5,3 Z"/><circle cx="1" cy="0" r="0.95"/><path d="M3.3,-4.1 Q6.3,0 3.3,4.1" fill="none" stroke="#c8c8c8" stroke-width="1.5" stroke-linecap="round"/><path d="M6.6,-6 Q11.2,0 6.6,6" fill="none" stroke="#c8c8c8" stroke-width="1.6" stroke-linecap="round"/></g><rect x="150.90" y="704.58" width="5.20" height="1.15" fill="#b4b4b4"/><rect x="153.30" y="710.01" width="2.80" height="1.15" fill="#b4b4b4"/><rect x="153.30" y="715.44" width="2.80" height="1.15" fill="#b4b4b4"/><rect x="153.30" y="720.87" width="2.80" height="1.15" fill="#b4b4b4"/><rect x="153.30" y="726.30" width="2.80" height="1.15" fill="#b4b4b4"/><rect x="150.90" y="731.73" width="5.20" height="1.15" fill="#b4b4b4"/><rect x="153.30" y="737.16" width="2.80" height="1.15" fill="#b4b4b4"/><rect x="153.30" y="742.59" width="2.80" height="1.15" fill="#b4b4b4"/><rect x="153.30" y="748.02" width="2.80" height="1.15" fill="#b4b4b4"/><rect x="153.30" y="753.45" width="2.80" height="1.15" fill="#b4b4b4"/><rect x="150.90" y="758.88" width="5.20" height="1.15" fill="#b4b4b4"/><rect x="153.30" y="764.31" width="2.80" height="1.15" fill="#b4b4b4"/><rect x="153.30" y="769.74" width="2.80" height="1.15" fill="#b4b4b4"/><rect x="153.30" y="775.17" width="2.80" height="1.15" fill="#b4b4b4"/><rect x="153.30" y="780.60" width="2.80" height="1.15" fill="#b4b4b4"/><rect x="150.90" y="786.03" width="5.20" height="1.15" fill="#b4b4b4"/><path d="M165.00,714.50 L168.40,714.50 L165.00,784.10 Z" fill="#7a7a7a"/><rect x="160.60" y="714.50" width="2.3" height="74.40" fill="#241c1c"/><rect x="162.90" y="714.50" width="2.1" height="75.60" fill="#d4d4d4"/><rect x="160.40" y="788.90" width="4.6" height="1.7" fill="#f0f0f0"/><g transform="translate(157.80 694.50) scale(1.0063 0.9918)"><rect x="0" y="0" width="16" height="24.4" rx="1.2" fill="#1a569c"/><path d="M0,1 Q0,0 1,0 L15,0 Q15.8,0 15.6,0.8 L14.3,3.4 L2,3.4 L2,20.5 L4.2,20.5 L0.7,24.4 Q0,24.4 0,23.6 Z" fill="#aed6fb"/><rect x="2" y="3.5" width="12.3" height="7.4" fill="#1f5a98"/><rect x="2" y="7.6" width="12.3" height="3.3" fill="#2c66a6"/><rect x="2" y="10.6" width="12.3" height="0.9" fill="#16488a"/><rect x="1.3" y="11.5" width="14" height="1.5" fill="#e9edf1"/><rect x="2" y="13" width="12.3" height="7.5" fill="#3c78b8"/><rect x="2" y="15.5" width="12.3" height="1.1" fill="#9fc6ee"/><rect x="2" y="17.9" width="12.3" height="1.4" fill="#8eaed4"/><rect x="2" y="19.2" width="12.3" height="1.3" fill="#e2eaf2"/><path d="M4.2,20.5 L16,20.5 L16,23.2 Q16,24.4 14.8,24.4 L0.7,24.4 Z" fill="#0e4a92"/></g><g transform="translate(218.40 761.30)" fill="#c8c8c8"><path d="M-10.5,-3 L-7.6,-3 L-2.6,-7 L-2.6,7 L-7.6,3 L-10.5,3 Z"/><circle cx="1" cy="0" r="0.95"/><path d="M3.3,-4.1 Q6.3,0 3.3,4.1" fill="none" stroke="#c8c8c8" stroke-width="1.5" stroke-linecap="round"/><path d="M6.6,-6 Q11.2,0 6.6,6" fill="none" stroke="#c8c8c8" stroke-width="1.6" stroke-linecap="round"/></g><rect x="273.70" y="704.58" width="5.20" height="1.15" fill="#b4b4b4"/><rect x="276.10" y="710.01" width="2.80" height="1.15" fill="#b4b4b4"/><rect x="276.10" y="715.44" width="2.80" height="1.15" fill="#b4b4b4"/><rect x="276.10" y="720.87" width="2.80" height="1.15" fill="#b4b4b4"/><rect x="276.10" y="726.30" width="2.80" height="1.15" fill="#b4b4b4"/><rect x="273.70" y="731.73" width="5.20" height="1.15" fill="#b4b4b4"/><rect x="276.10" y="737.16" width="2.80" height="1.15" fill="#b4b4b4"/><rect x="276.10" y="742.59" width="2.80" height="1.15" fill="#b4b4b4"/><rect x="276.10" y="748.02" width="2.80" height="1.15" fill="#b4b4b4"/><rect x="276.10" y="753.45" width="2.80" height="1.15" fill="#b4b4b4"/><rect x="273.70" y="758.88" width="5.20" height="1.15" fill="#b4b4b4"/><rect x="276.10" y="764.31" width="2.80" height="1.15" fill="#b4b4b4"/><rect x="276.10" y="769.74" width="2.80" height="1.15" fill="#b4b4b4"/><rect x="276.10" y="775.17" width="2.80" height="1.15" fill="#b4b4b4"/><rect x="276.10" y="780.60" width="2.80" height="1.15" fill="#b4b4b4"/><rect x="273.70" y="786.03" width="5.20" height="1.15" fill="#b4b4b4"/><path d="M287.80,714.50 L291.20,714.50 L287.80,784.10 Z" fill="#7a7a7a"/><rect x="283.40" y="714.50" width="2.3" height="74.40" fill="#241c1c"/><rect x="285.70" y="714.50" width="2.1" height="75.60" fill="#d4d4d4"/><rect x="283.20" y="788.90" width="4.6" height="1.7" fill="#f0f0f0"/><g transform="translate(280.60 694.50) scale(1.0063 0.9918)"><rect x="0" y="0" width="16" height="24.4" rx="1.2" fill="#1a569c"/><path d="M0,1 Q0,0 1,0 L15,0 Q15.8,0 15.6,0.8 L14.3,3.4 L2,3.4 L2,20.5 L4.2,20.5 L0.7,24.4 Q0,24.4 0,23.6 Z" fill="#aed6fb"/><rect x="2" y="3.5" width="12.3" height="7.4" fill="#1f5a98"/><rect x="2" y="7.6" width="12.3" height="3.3" fill="#2c66a6"/><rect x="2" y="10.6" width="12.3" height="0.9" fill="#16488a"/><rect x="1.3" y="11.5" width="14" height="1.5" fill="#e9edf1"/><rect x="2" y="13" width="12.3" height="7.5" fill="#3c78b8"/><rect x="2" y="15.5" width="12.3" height="1.1" fill="#9fc6ee"/><rect x="2" y="17.9" width="12.3" height="1.4" fill="#8eaed4"/><rect x="2" y="19.2" width="12.3" height="1.3" fill="#e2eaf2"/><path d="M4.2,20.5 L16,20.5 L16,23.2 Q16,24.4 14.8,24.4 L0.7,24.4 Z" fill="#0e4a92"/></g><g transform="translate(341.20 761.30)" fill="#c8c8c8"><path d="M-10.5,-3 L-7.6,-3 L-2.6,-7 L-2.6,7 L-7.6,3 L-10.5,3 Z"/><circle cx="1" cy="0" r="0.95"/><path d="M3.3,-4.1 Q6.3,0 3.3,4.1" fill="none" stroke="#c8c8c8" stroke-width="1.5" stroke-linecap="round"/><path d="M6.6,-6 Q11.2,0 6.6,6" fill="none" stroke="#c8c8c8" stroke-width="1.6" stroke-linecap="round"/></g><rect x="396.40" y="704.58" width="5.20" height="1.15" fill="#b4b4b4"/><rect x="398.80" y="710.01" width="2.80" height="1.15" fill="#b4b4b4"/><rect x="398.80" y="715.44" width="2.80" height="1.15" fill="#b4b4b4"/><rect x="398.80" y="720.87" width="2.80" height="1.15" fill="#b4b4b4"/><rect x="398.80" y="726.30" width="2.80" height="1.15" fill="#b4b4b4"/><rect x="396.40" y="731.73" width="5.20" height="1.15" fill="#b4b4b4"/><rect x="398.80" y="737.16" width="2.80" height="1.15" fill="#b4b4b4"/><rect x="398.80" y="742.59" width="2.80" height="1.15" fill="#b4b4b4"/><rect x="398.80" y="748.02" width="2.80" height="1.15" fill="#b4b4b4"/><rect x="398.80" y="753.45" width="2.80" height="1.15" fill="#b4b4b4"/><rect x="396.40" y="758.88" width="5.20" height="1.15" fill="#b4b4b4"/><rect x="398.80" y="764.31" width="2.80" height="1.15" fill="#b4b4b4"/><rect x="398.80" y="769.74" width="2.80" height="1.15" fill="#b4b4b4"/><rect x="398.80" y="775.17" width="2.80" height="1.15" fill="#b4b4b4"/><rect x="398.80" y="780.60" width="2.80" height="1.15" fill="#b4b4b4"/><rect x="396.40" y="786.03" width="5.20" height="1.15" fill="#b4b4b4"/><path d="M410.50,714.50 L413.90,714.50 L410.50,784.10 Z" fill="#7a7a7a"/><rect x="406.10" y="714.50" width="2.3" height="74.40" fill="#241c1c"/><rect x="408.40" y="714.50" width="2.1" height="75.60" fill="#d4d4d4"/><rect x="405.90" y="788.90" width="4.6" height="1.7" fill="#f0f0f0"/><g transform="translate(403.30 694.50) scale(1.0063 0.9918)"><rect x="0" y="0" width="16" height="24.4" rx="1.2" fill="#1a569c"/><path d="M0,1 Q0,0 1,0 L15,0 Q15.8,0 15.6,0.8 L14.3,3.4 L2,3.4 L2,20.5 L4.2,20.5 L0.7,24.4 Q0,24.4 0,23.6 Z" fill="#aed6fb"/><rect x="2" y="3.5" width="12.3" height="7.4" fill="#1f5a98"/><rect x="2" y="7.6" width="12.3" height="3.3" fill="#2c66a6"/><rect x="2" y="10.6" width="12.3" height="0.9" fill="#16488a"/><rect x="1.3" y="11.5" width="14" height="1.5" fill="#e9edf1"/><rect x="2" y="13" width="12.3" height="7.5" fill="#3c78b8"/><rect x="2" y="15.5" width="12.3" height="1.1" fill="#9fc6ee"/><rect x="2" y="17.9" width="12.3" height="1.4" fill="#8eaed4"/><rect x="2" y="19.2" width="12.3" height="1.3" fill="#e2eaf2"/><path d="M4.2,20.5 L16,20.5 L16,23.2 Q16,24.4 14.8,24.4 L0.7,24.4 Z" fill="#0e4a92"/></g><g transform="translate(463.90 761.30)" fill="#c8c8c8"><path d="M-10.5,-3 L-7.6,-3 L-2.6,-7 L-2.6,7 L-7.6,3 L-10.5,3 Z"/><circle cx="1" cy="0" r="0.95"/><path d="M3.3,-4.1 Q6.3,0 3.3,4.1" fill="none" stroke="#c8c8c8" stroke-width="1.5" stroke-linecap="round"/><path d="M6.6,-6 Q11.2,0 6.6,6" fill="none" stroke="#c8c8c8" stroke-width="1.6" stroke-linecap="round"/></g><rect x="518.90" y="704.58" width="5.20" height="1.15" fill="#b4b4b4"/><rect x="521.30" y="710.01" width="2.80" height="1.15" fill="#b4b4b4"/><rect x="521.30" y="715.44" width="2.80" height="1.15" fill="#b4b4b4"/><rect x="521.30" y="720.87" width="2.80" height="1.15" fill="#b4b4b4"/><rect x="521.30" y="726.30" width="2.80" height="1.15" fill="#b4b4b4"/><rect x="518.90" y="731.73" width="5.20" height="1.15" fill="#b4b4b4"/><rect x="521.30" y="737.16" width="2.80" height="1.15" fill="#b4b4b4"/><rect x="521.30" y="742.59" width="2.80" height="1.15" fill="#b4b4b4"/><rect x="521.30" y="748.02" width="2.80" height="1.15" fill="#b4b4b4"/><rect x="521.30" y="753.45" width="2.80" height="1.15" fill="#b4b4b4"/><rect x="518.90" y="758.88" width="5.20" height="1.15" fill="#b4b4b4"/><rect x="521.30" y="764.31" width="2.80" height="1.15" fill="#b4b4b4"/><rect x="521.30" y="769.74" width="2.80" height="1.15" fill="#b4b4b4"/><rect x="521.30" y="775.17" width="2.80" height="1.15" fill="#b4b4b4"/><rect x="521.30" y="780.60" width="2.80" height="1.15" fill="#b4b4b4"/><rect x="518.90" y="786.03" width="5.20" height="1.15" fill="#b4b4b4"/><path d="M533.00,721.30 L536.40,721.30 L533.00,784.10 Z" fill="#7a7a7a"/><rect x="528.60" y="721.30" width="2.3" height="67.60" fill="#241c1c"/><rect x="530.90" y="721.30" width="2.1" height="68.80" fill="#d4d4d4"/><rect x="528.40" y="788.90" width="4.6" height="1.7" fill="#f0f0f0"/><g transform="translate(525.80 701.30) scale(1.0063 0.9918)"><rect x="0" y="0" width="16" height="24.4" rx="1.2" fill="#1a569c"/><path d="M0,1 Q0,0 1,0 L15,0 Q15.8,0 15.6,0.8 L14.3,3.4 L2,3.4 L2,20.5 L4.2,20.5 L0.7,24.4 Q0,24.4 0,23.6 Z" fill="#aed6fb"/><rect x="2" y="3.5" width="12.3" height="7.4" fill="#1f5a98"/><rect x="2" y="7.6" width="12.3" height="3.3" fill="#2c66a6"/><rect x="2" y="10.6" width="12.3" height="0.9" fill="#16488a"/><rect x="1.3" y="11.5" width="14" height="1.5" fill="#e9edf1"/><rect x="2" y="13" width="12.3" height="7.5" fill="#3c78b8"/><rect x="2" y="15.5" width="12.3" height="1.1" fill="#9fc6ee"/><rect x="2" y="17.9" width="12.3" height="1.4" fill="#8eaed4"/><rect x="2" y="19.2" width="12.3" height="1.3" fill="#e2eaf2"/><path d="M4.2,20.5 L16,20.5 L16,23.2 Q16,24.4 14.8,24.4 L0.7,24.4 Z" fill="#0e4a92"/></g><g transform="translate(586.40 761.30)" fill="#c8c8c8"><path d="M-10.5,-3 L-7.6,-3 L-2.6,-7 L-2.6,7 L-7.6,3 L-10.5,3 Z"/><circle cx="1" cy="0" r="0.95"/><path d="M3.3,-4.1 Q6.3,0 3.3,4.1" fill="none" stroke="#c8c8c8" stroke-width="1.5" stroke-linecap="round"/><path d="M6.6,-6 Q11.2,0 6.6,6" fill="none" stroke="#c8c8c8" stroke-width="1.6" stroke-linecap="round"/></g><rect x="641.70" y="704.58" width="5.20" height="1.15" fill="#b4b4b4"/><rect x="644.10" y="710.01" width="2.80" height="1.15" fill="#b4b4b4"/><rect x="644.10" y="715.44" width="2.80" height="1.15" fill="#b4b4b4"/><rect x="644.10" y="720.87" width="2.80" height="1.15" fill="#b4b4b4"/><rect x="644.10" y="726.30" width="2.80" height="1.15" fill="#b4b4b4"/><rect x="641.70" y="731.73" width="5.20" height="1.15" fill="#b4b4b4"/><rect x="644.10" y="737.16" width="2.80" height="1.15" fill="#b4b4b4"/><rect x="644.10" y="742.59" width="2.80" height="1.15" fill="#b4b4b4"/><rect x="644.10" y="748.02" width="2.80" height="1.15" fill="#b4b4b4"/><rect x="644.10" y="753.45" width="2.80" height="1.15" fill="#b4b4b4"/><rect x="641.70" y="758.88" width="5.20" height="1.15" fill="#b4b4b4"/><rect x="644.10" y="764.31" width="2.80" height="1.15" fill="#b4b4b4"/><rect x="644.10" y="769.74" width="2.80" height="1.15" fill="#b4b4b4"/><rect x="644.10" y="775.17" width="2.80" height="1.15" fill="#b4b4b4"/><rect x="644.10" y="780.60" width="2.80" height="1.15" fill="#b4b4b4"/><rect x="641.70" y="786.03" width="5.20" height="1.15" fill="#b4b4b4"/><path d="M655.80,721.30 L659.20,721.30 L655.80,784.10 Z" fill="#7a7a7a"/><rect x="651.40" y="721.30" width="2.3" height="67.60" fill="#241c1c"/><rect x="653.70" y="721.30" width="2.1" height="68.80" fill="#d4d4d4"/><rect x="651.20" y="788.90" width="4.6" height="1.7" fill="#f0f0f0"/><g transform="translate(648.60 701.30) scale(1.0063 0.9918)"><rect x="0" y="0" width="16" height="24.4" rx="1.2" fill="#1a569c"/><path d="M0,1 Q0,0 1,0 L15,0 Q15.8,0 15.6,0.8 L14.3,3.4 L2,3.4 L2,20.5 L4.2,20.5 L0.7,24.4 Q0,24.4 0,23.6 Z" fill="#aed6fb"/><rect x="2" y="3.5" width="12.3" height="7.4" fill="#1f5a98"/><rect x="2" y="7.6" width="12.3" height="3.3" fill="#2c66a6"/><rect x="2" y="10.6" width="12.3" height="0.9" fill="#16488a"/><rect x="1.3" y="11.5" width="14" height="1.5" fill="#e9edf1"/><rect x="2" y="13" width="12.3" height="7.5" fill="#3c78b8"/><rect x="2" y="15.5" width="12.3" height="1.1" fill="#9fc6ee"/><rect x="2" y="17.9" width="12.3" height="1.4" fill="#8eaed4"/><rect x="2" y="19.2" width="12.3" height="1.3" fill="#e2eaf2"/><path d="M4.2,20.5 L16,20.5 L16,23.2 Q16,24.4 14.8,24.4 L0.7,24.4 Z" fill="#0e4a92"/></g><g transform="translate(709.20 761.30)" fill="#c8c8c8"><path d="M-10.5,-3 L-7.6,-3 L-2.6,-7 L-2.6,7 L-7.6,3 L-10.5,3 Z"/><circle cx="1" cy="0" r="0.95"/><path d="M3.3,-4.1 Q6.3,0 3.3,4.1" fill="none" stroke="#c8c8c8" stroke-width="1.5" stroke-linecap="round"/><path d="M6.6,-6 Q11.2,0 6.6,6" fill="none" stroke="#c8c8c8" stroke-width="1.6" stroke-linecap="round"/></g><rect x="129.60" y="645" width="1" height="152" fill="#3d3d3d"/><rect x="130.60" y="645" width="1" height="152" fill="#525252"/><rect x="252.40" y="645" width="1" height="152" fill="#3d3d3d"/><rect x="253.40" y="645" width="1" height="152" fill="#525252"/><rect x="375.00" y="645" width="1" height="152" fill="#3d3d3d"/><rect x="376.00" y="645" width="1" height="152" fill="#525252"/><rect x="497.70" y="645" width="1" height="152" fill="#3d3d3d"/><rect x="498.70" y="645" width="1" height="152" fill="#525252"/><rect x="620.00" y="645" width="1" height="152" fill="#3d3d3d"/><rect x="621.00" y="645" width="1" height="152" fill="#525252"/><rect x="877.30" y="645" width="1" height="152" fill="#3d3d3d"/><rect x="878.30" y="645" width="1" height="152" fill="#525252"/><rect x="789.60" y="700.75" width="7.20" height="1.05" fill="#b0b0b0"/><rect x="792.60" y="704.17" width="4.20" height="1.05" fill="#b0b0b0"/><rect x="792.60" y="707.60" width="4.20" height="1.05" fill="#b0b0b0"/><rect x="789.60" y="711.02" width="7.20" height="1.05" fill="#b0b0b0"/><rect x="792.60" y="714.44" width="4.20" height="1.05" fill="#b0b0b0"/><rect x="792.60" y="717.87" width="4.20" height="1.05" fill="#b0b0b0"/><rect x="792.60" y="721.29" width="4.20" height="1.05" fill="#b0b0b0"/><rect x="792.60" y="724.71" width="4.20" height="1.05" fill="#b0b0b0"/><rect x="789.60" y="728.13" width="7.20" height="1.05" fill="#b0b0b0"/><rect x="792.60" y="731.56" width="4.20" height="1.05" fill="#b0b0b0"/><rect x="792.60" y="734.98" width="4.20" height="1.05" fill="#b0b0b0"/><rect x="792.60" y="738.40" width="4.20" height="1.05" fill="#b0b0b0"/><rect x="792.60" y="741.83" width="4.20" height="1.05" fill="#b0b0b0"/><rect x="789.60" y="745.25" width="7.20" height="1.05" fill="#b0b0b0"/><rect x="792.60" y="748.67" width="4.20" height="1.05" fill="#b0b0b0"/><rect x="792.60" y="752.10" width="4.20" height="1.05" fill="#b0b0b0"/><rect x="792.60" y="755.52" width="4.20" height="1.05" fill="#b0b0b0"/><rect x="792.60" y="758.94" width="4.20" height="1.05" fill="#b0b0b0"/><rect x="789.60" y="762.36" width="7.20" height="1.05" fill="#b0b0b0"/><rect x="792.60" y="765.79" width="4.20" height="1.05" fill="#b0b0b0"/><rect x="792.60" y="769.21" width="4.20" height="1.05" fill="#b0b0b0"/><rect x="792.60" y="772.63" width="4.20" height="1.05" fill="#b0b0b0"/><rect x="792.60" y="776.06" width="4.20" height="1.05" fill="#b0b0b0"/><rect x="789.60" y="779.48" width="7.20" height="1.05" fill="#b0b0b0"/><path d="M804,699 L808.2,699 L805,774 L804,774 Z" fill="#808080"/><rect x="798.8" y="700" width="2.3" height="81" fill="#241c1c"/><rect x="801.2" y="699" width="2.9" height="83" fill="#d0d0d0"/><rect x="798.8" y="781" width="5.3" height="1.7" fill="#f0f0f0"/><g transform="translate(797.00 733.30) scale(0.9500 0.9754)"><rect x="0" y="0" width="16" height="24.4" rx="1.2" fill="#1a569c"/><path d="M0,1 Q0,0 1,0 L15,0 Q15.8,0 15.6,0.8 L14.3,3.4 L2,3.4 L2,20.5 L4.2,20.5 L0.7,24.4 Q0,24.4 0,23.6 Z" fill="#aed6fb"/><rect x="2" y="3.5" width="12.3" height="7.4" fill="#1f5a98"/><rect x="2" y="7.6" width="12.3" height="3.3" fill="#2c66a6"/><rect x="2" y="10.6" width="12.3" height="0.9" fill="#16488a"/><rect x="1.3" y="11.5" width="14" height="1.5" fill="#e9edf1"/><rect x="2" y="13" width="12.3" height="7.5" fill="#3c78b8"/><rect x="2" y="15.5" width="12.3" height="1.1" fill="#9fc6ee"/><rect x="2" y="17.9" width="12.3" height="1.4" fill="#8eaed4"/><rect x="2" y="19.2" width="12.3" height="1.3" fill="#e2eaf2"/><path d="M4.2,20.5 L16,20.5 L16,23.2 Q16,24.4 14.8,24.4 L0.7,24.4 Z" fill="#0e4a92"/></g><g transform="translate(846.40 753.40)" fill="#c8c8c8"><path d="M-10.5,-3 L-7.6,-3 L-2.6,-7 L-2.6,7 L-7.6,3 L-10.5,3 Z"/><circle cx="1" cy="0" r="0.95"/><path d="M3.3,-4.1 Q6.3,0 3.3,4.1" fill="none" stroke="#c8c8c8" stroke-width="1.5" stroke-linecap="round"/><path d="M6.6,-6 Q11.2,0 6.6,6" fill="none" stroke="#c8c8c8" stroke-width="1.6" stroke-linecap="round"/></g>
</svg>
</body></html>
